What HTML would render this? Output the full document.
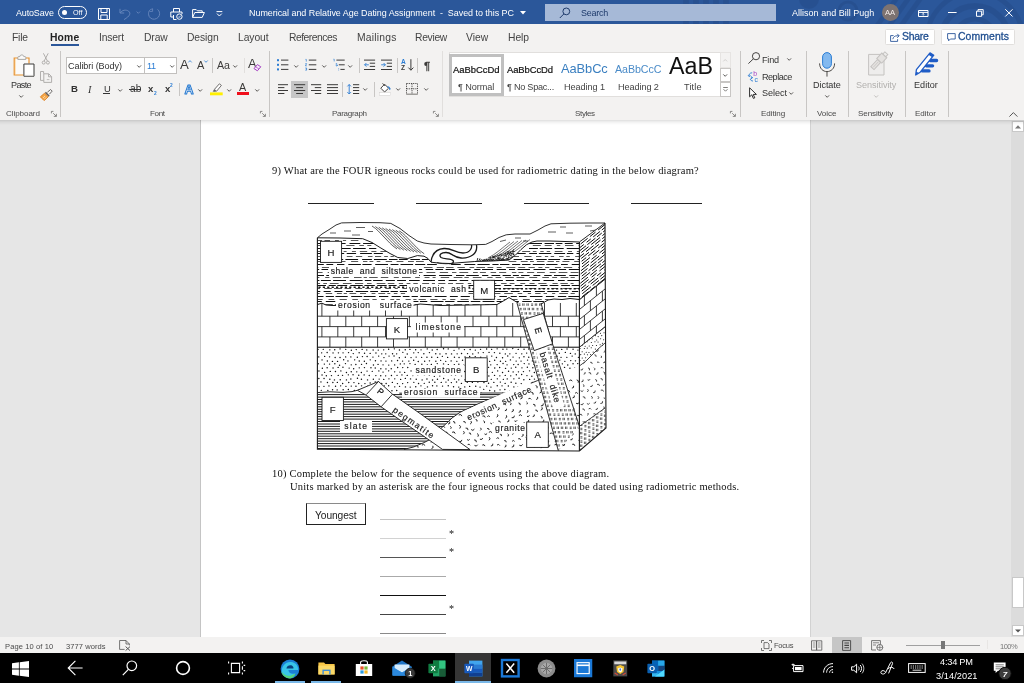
<!DOCTYPE html>
<html lang="en">
<head>
<meta charset="utf-8">
<title>Numerical and Relative Age Dating Assignment - Word</title>
<style>
*{box-sizing:border-box;margin:0;padding:0}
html,body{width:1024px;height:683px;overflow:hidden;background:#e6e6e6}
body{position:relative;font-family:"Liberation Sans",sans-serif;font-size:9.6px;color:#333;-webkit-font-smoothing:antialiased}
.abs,.t{position:absolute;white-space:nowrap}
.t{line-height:1;transform-origin:0 0;will-change:transform}
#titlebar{position:absolute;left:0;top:0;width:1024px;height:24px;background:#2b579a;overflow:hidden;color:#fff}
#tabs{position:absolute;left:0;top:24px;width:1024px;height:24px;background:#f3f2f1}
#ribbon{position:absolute;left:0;top:48px;width:1024px;height:71.7px;background:#f3f2f1;z-index:4}
#ribshadow{position:absolute;left:0;top:119.7px;width:1024px;height:5px;background:linear-gradient(rgba(0,0,0,.13),rgba(0,0,0,.05) 40%,rgba(0,0,0,0));z-index:5}
#docarea{position:absolute;left:0;top:119px;width:1024px;height:515px;background:#e6e6e6}
#page{position:absolute;left:200.2px;top:119px;width:611px;height:517.5px;background:#fff;border-left:1px solid #c4c4c4;border-right:1px solid #d2d2d2}
#statusbar{position:absolute;left:0;top:636.5px;width:1024px;height:17px;background:#f3f2f1;color:#555}
#taskbar{position:absolute;left:0;top:653px;width:1024px;height:30px;background:#000}
.serif{font-family:"Liberation Serif",serif;color:#111}
.tab{top:7px;font-size:10.2px;color:#444}
#sN1,#sS1{-webkit-text-stroke:.2px #111}
.sep{position:absolute;width:1px;background:#c8c6c4}
.grp{color:#555;font-size:8.4px}
svg{position:absolute;overflow:visible}
</style>
</head>
<body>

<!-- ================= TITLE BAR ================= -->
<div id="titlebar">
  <!-- decorative pattern -->
  <svg style="left:560px;top:0" width="464" height="24" viewBox="560 0 464 24">
    <g fill="none" stroke="#264d8b" stroke-width="5" opacity=".6">
      <path d="M686 -2V26M696 -2V26M706 -2V26M716 -2V26M726 -2V26" stroke-width="5.5"/>
      <circle cx="848" cy="11" r="9" stroke-width="3"/>
      <circle cx="848" cy="11" r="2.6" fill="#264d8b" stroke="none"/>
      <circle cx="809" cy="-1" r="10" fill="#264d8b" stroke="none"/>
      <path d="M874 30 L899 -5 M886 30 L911 -5 M898 30 L923 -5" stroke-width="5"/>
      <circle cx="975" cy="40" r="34" stroke-width="6"/>
      <circle cx="975" cy="40" r="48" stroke-width="5"/>
      <circle cx="975" cy="40" r="21" stroke-width="5"/>
    </g>
  </svg>
  <span class="t" id="tAuto" style="left:15.57px;top:9.00px;font-size:8.96px;letter-spacing:-0.137px">AutoSave</span>
  <div class="abs" style="left:58px;top:6px;width:28.5px;height:12.5px;border:1px solid #fff;border-radius:7px"></div>
  <div class="abs" style="left:62px;top:10px;width:5px;height:5px;border-radius:3px;background:#fff"></div>
  <span class="t" style="left:72.5px;top:9.2px;font-size:7.2px">Off</span>
  <!-- save -->
  <svg style="left:98px;top:8px" width="12" height="12" viewBox="0 0 12 12" fill="none" stroke="#fff" stroke-width="1">
    <path d="M.5 .5H11.5V11.5H.5Z"/><path d="M3 .5V4.5H9V.5"/><path d="M2.8 11.5V7H9.2V11.5"/>
  </svg>
  <!-- undo / redo dim -->
  <svg style="left:119px;top:8px" width="44" height="12" viewBox="0 0 44 12" fill="none" stroke="#6585bb" stroke-width="1">
    <path d="M1 .8V5H5.2"/><path d="M1.2 5C3 2 7 1.3 9.6 3.2C12 5.2 11.2 8 5 11.6"/>
    <path d="M17.6 3.6L19.3 5.3L21 3.6" stroke-width=".9"/>
    <path d="M33.5 1.2C30.5 .8 29.3 4 29.5 6.2C29.8 9.6 32.5 11.4 35.5 11.2C38.8 10.8 40.8 8 40.6 5.4C40.5 3.6 39.6 2.3 38.6 1.4"/><path d="M33.6 .4V3.4H30.6" stroke-width=".9"/>
  </svg>
  <!-- print preview -->
  <svg style="left:170px;top:8px" width="13" height="12" viewBox="0 0 13 12" fill="none" stroke="#fff" stroke-width="1">
    <path d="M3.5 4V.5H9.5V4"/><path d="M3.5 9H.8V4H12V6"/><path d="M3.5 7V11.5H6.5"/><circle cx="9.4" cy="8.6" r="2.7"/><path d="M8.2 8.6L9.1 9.5L10.7 7.7" stroke-width=".8"/>
  </svg>
  <!-- folder -->
  <svg style="left:191.5px;top:9px" width="13" height="9" viewBox="0 0 13 9" fill="none" stroke="#fff" stroke-width="1">
    <path d="M.6 8.4V.6H4.2L5.4 1.8H10.2V3.5"/><path d="M.6 8.4L2.8 3.5H12.4L10.2 8.4Z"/>
  </svg>
  <!-- customize -->
  <svg style="left:216px;top:10.5px" width="7" height="6" viewBox="0 0 7 6" fill="none" stroke="#fff" stroke-width="1">
    <path d="M.5 .6H6.3"/><path d="M1 2.6L3.4 5L5.8 2.6"/>
  </svg>
  <span class="t" id="tTitle" style="left:249.07px;top:9.00px;font-size:8.96px;letter-spacing:-0.035px">Numerical and Relative Age Dating Assignment&nbsp;&nbsp;-&nbsp;&nbsp;Saved to this PC</span>
  <svg style="left:519.5px;top:10.5px" width="6" height="4" viewBox="0 0 6 4"><path d="M0 0H6L3 3.4Z" fill="#fff"/></svg>
  <!-- search -->
  <div class="abs" style="left:545px;top:4px;width:230.5px;height:17px;background:#a6b9d7"></div>
  <svg style="left:559px;top:6.5px" width="12" height="12" viewBox="0 0 12 12" fill="none" stroke="#1e3a6b" stroke-width="1">
    <circle cx="7.3" cy="4.4" r="3.4"/><path d="M4.9 6.9L.8 11"/>
  </svg>
  <span class="t" id="tSearch" style="left:581.32px;top:9.00px;font-size:8.96px;color:#1e3a6b;letter-spacing:-0.25px">Search</span>
  <span class="t" id="tUser" style="left:792.25px;top:9.00px;font-size:8.96px;letter-spacing:0.036px">Allison and Bill Pugh</span>
  <div class="abs" style="left:881.5px;top:3.5px;width:17px;height:17px;border-radius:9px;background:#7d7371"></div>
  <span class="t" style="left:884.6px;top:9px;font-size:7.6px;color:#f3ecea">AA</span>
  <!-- ribbon display -->
  <svg style="left:917.5px;top:9.5px" width="11" height="7" viewBox="0 0 11 7" fill="none" stroke="#fff" stroke-width="1">
    <path d="M.5 .5H10V6.5H.5Z"/><path d="M.5 2.4H10"/><path d="M5.2 5.6V3.4M4.2 4.4L5.2 3.4L6.2 4.4" stroke-width=".8"/>
  </svg>
  <svg style="left:947.5px;top:12px" width="9" height="2" viewBox="0 0 9 2"><path d="M0 .5H8.6" stroke="#fff" stroke-width="1"/></svg>
  <svg style="left:976px;top:9px" width="8" height="8" viewBox="0 0 8 8" fill="none" stroke="#fff" stroke-width="1">
    <path d="M.5 2.2H5.6V7.3H.5Z"/><path d="M2 2.2V.6H7.2V5.8H5.6"/>
  </svg>
  <svg style="left:1005px;top:9px" width="8" height="8" viewBox="0 0 8 8" fill="none" stroke="#fff" stroke-width="1">
    <path d="M.3 .3L7.5 7.5M7.5 .3L.3 7.5"/>
  </svg>
</div>

<!-- ================= TABS ================= -->
<div id="tabs">
  <span class="t tab" id="tbFile" style="left:11.79px;top:9.00px;font-size:10.32px;letter-spacing:-0.203px">File</span>
  <span class="t tab" id="tbHome" style="left:50.10px;top:9.00px;font-size:10.32px;font-weight:bold;color:#222;letter-spacing:0.169px">Home</span>
  <div class="abs" style="left:50.5px;top:19.5px;width:28.4px;height:2.4px;background:#2b579a"></div>
  <span class="t tab" id="tbInsert" style="left:98.50px;top:9.00px;font-size:10.32px;letter-spacing:-0.155px">Insert</span>
  <span class="t tab" id="tbDraw" style="left:143.60px;top:9.00px;font-size:10.32px;letter-spacing:-0.117px">Draw</span>
  <span class="t tab" id="tbDesign" style="left:186.79px;top:9.00px;font-size:10.32px;letter-spacing:-0.078px">Design</span>
  <span class="t tab" id="tbLayout" style="left:237.90px;top:9.00px;font-size:10.32px;letter-spacing:-0.072px">Layout</span>
  <span class="t tab" id="tbRef" style="left:288.60px;top:9.00px;font-size:10.32px;letter-spacing:-0.493px">References</span>
  <span class="t tab" id="tbMail" style="left:357.00px;top:9.00px;font-size:10.32px;letter-spacing:0.211px">Mailings</span>
  <span class="t tab" id="tbReview" style="left:415.20px;top:9.00px;font-size:10.32px;letter-spacing:-0.302px">Review</span>
  <span class="t tab" id="tbView" style="left:466.40px;top:9.00px;font-size:10.32px;letter-spacing:0.046px">View</span>
  <span class="t tab" id="tbHelp" style="left:507.90px;top:9.00px;font-size:10.32px;letter-spacing:-0.067px">Help</span>
  <div class="abs" style="left:884.5px;top:5px;width:50px;height:16px;background:#fff;border:1px solid #e1dfdd;border-radius:1.5px"></div>
  <svg style="left:889.5px;top:8.5px" width="10" height="9" viewBox="0 0 10 9" fill="none" stroke="#2b579a" stroke-width=".9">
    <path d="M3.6 2.6H.6V8.4H7.6V6.2"/><path d="M2.8 6.2C3.2 4 4.8 2.8 7 2.8H9"/><path d="M7.2 .8L9.2 2.8L7.2 4.8"/>
  </svg>
  <span class="t" id="tbShare" style="left:901.73px;top:8.01px;font-size:10.43px;-webkit-text-stroke:.3px #1f4e8f;color:#1f4e8f;letter-spacing:-0.254px">Share</span>
  <div class="abs" style="left:941px;top:5px;width:73.5px;height:16px;background:#fff;border:1px solid #e1dfdd;border-radius:1.5px"></div>
  <svg style="left:946.5px;top:8.5px" width="9" height="9" viewBox="0 0 9 9" fill="none" stroke="#2b579a" stroke-width=".9">
    <path d="M.6 .6H8.2V6H3.4L1.6 7.8V6H.6Z"/>
  </svg>
  <span class="t" id="tbComm" style="left:957.99px;top:8.01px;font-size:10.43px;-webkit-text-stroke:.3px #1f4e8f;color:#1f4e8f;letter-spacing:0.098px">Comments</span>
</div>

<!-- ================= RIBBON ================= -->
<div id="ribbon">
<!--R1-->
<svg style="left:12.5px;top:5.5px" width="23" height="23" viewBox="0 0 23 23" fill="none">
 <path d="M1.2 4H16V21H1.2Z" fill="#fbfaf9"/>
 <path d="M2.3 4.8V20.2" stroke="#fde3bd" stroke-width="1.4"/>
 <path d="M5.2 4H1.2V21H10.6" stroke="#e8912d" stroke-width="1.15"/>
 <path d="M12.6 4H16V9.6" stroke="#e8912d" stroke-width="1.15"/>
 <path d="M4.8 5.4V3.4C4.8 2.8 5.2 2.6 5.8 2.6H6.8C6.8 .4 10.8 .4 10.8 2.6H11.8C12.4 2.6 12.8 2.8 12.8 3.4V5.4Z" fill="#fafafa" stroke="#979593" stroke-width=".8"/>
 <path d="M10.9 10H21V22.2H10.9Z" fill="#fff" stroke="#3b3a39" stroke-width="1"/>
 <path d="M11.6 21.4H20.4" stroke="#d8d6d4" stroke-width=".8"/>
</svg>
<span class="t" id="rPaste" style="left:11.15px;top:33.00px;font-size:9.09px;color:#333;letter-spacing:-0.645px">Paste</span>
<svg style="left:19px;top:47.1px" width="4.4" height="3" viewBox="0 0 4.4 3" fill="none" stroke="#484644" stroke-width=".9"><path d="M.3 .4L2.2 2.3L4.1 .4"/></svg>
<svg style="left:42px;top:5.3px" width="8" height="12" viewBox="0 0 8 12" fill="none" stroke="#a9a7a5" stroke-width=".9">
 <path d="M1.4 .3L5.4 8M6.2 .3L2.2 8"/><circle cx="1.7" cy="9.6" r="1.5"/><circle cx="5.9" cy="9.6" r="1.5"/></svg>
<svg style="left:40px;top:23px" width="13" height="12" viewBox="0 0 13 12" fill="none" stroke="#a9a7a5" stroke-width=".9">
 <path d="M3.6 2.6V.5H.5V9.4H3.6"/><path d="M3.8 2.8H8.8L11.6 5.6V11.4H3.8Z"/><path d="M8.6 3V5.8H11.4"/><path d="M6.8 8.6H9.4" stroke-width=".7"/></svg>
<svg style="left:40px;top:40.6px" width="13" height="12" viewBox="0 0 13 12" fill="none">
 <path d="M7.4 3.2L10.6 .5L12.2 2.1L9.4 5.2" stroke="#605e5c" stroke-width=".9"/>
 <path d="M5.4 3.4L9.2 7.2" stroke="#605e5c" stroke-width="1.5"/>
 <path d="M4.6 4.2L8.2 7.8L4.4 11.4C3.2 10.8 1.4 9.2.4 7.8Z" fill="#f4a84a" stroke="#de7c1a" stroke-width=".9"/>
 <path d="M3 9L5 7M4.4 10.2L6.4 8.2" stroke="#fff" stroke-width=".5"/></svg>
<span class="t" id="gClip" style="left:6.45px;top:62.01px;font-size:8.05px;color:#4a4a4a;letter-spacing:-0.061px">Clipboard</span>
<svg style="left:51px;top:63.3px" width="6" height="6" viewBox="0 0 6 6" fill="none" stroke="#605e5c" stroke-width=".7"><path d="M.4 2.4V.4H2.4"/><path d="M2.2 2.2L5.2 5.2M5.4 2.8V5.4H2.8"/></svg>
<div class="sep" style="left:59.5px;top:3.200000000000003px;height:65.39999999999999px"></div>
<div class="abs" style="left:66px;top:9px;width:79px;height:16.6px;background:#fff;border:1px solid #c2c0be"></div>
<div class="abs" style="left:144.2px;top:9px;width:33.2px;height:16.6px;background:#fff;border:1px solid #c2c0be"></div>
<span class="t" id="rFont" style="left:67.56px;top:14.01px;font-size:9.09px;color:#333;letter-spacing:-0.077px">Calibri (Body)</span>
<svg style="left:137.3px;top:17.0px" width="4.4" height="3" viewBox="0 0 4.4 3" fill="none" stroke="#484644" stroke-width=".9"><path d="M.3 .4L2.2 2.3L4.1 .4"/></svg>
<span class="t" id="rSize" style="left:146.56px;top:14.01px;font-size:9.09px;color:#2b7cd3;letter-spacing:-0.307px">11</span>
<svg style="left:170.2px;top:17.0px" width="4.4" height="3" viewBox="0 0 4.4 3" fill="none" stroke="#484644" stroke-width=".9"><path d="M.3 .4L2.2 2.3L4.1 .4"/></svg>
<span class="t" id="rGrowA" style="left:179.54px;top:10.01px;font-size:13.2px;color:#3b3a39">A</span>
<svg style="left:188.4px;top:12px" width="4" height="3" viewBox="0 0 4 3" fill="none" stroke="#2b7cd3" stroke-width=".8"><path d="M.3 2.4L2 .6L3.7 2.4"/></svg>
<span class="t" id="rShrA" style="left:197.45px;top:12.01px;font-size:11px;color:#3b3a39">A</span>
<svg style="left:204.4px;top:11.600000000000001px" width="4" height="3" viewBox="0 0 4 3" fill="none" stroke="#2b7cd3" stroke-width=".8"><path d="M.3 .5L2 2.3L3.7 .5"/></svg>
<div class="sep" style="left:212.4px;top:10.299999999999997px;height:14.299999999999997px"></div>
<span class="t" id="rAa" style="left:216.97px;top:12.01px;font-size:10.66px;color:#3b3a39;letter-spacing:-0.076px">Aa</span>
<svg style="left:232.8px;top:16.8px" width="4.4" height="3" viewBox="0 0 4.4 3" fill="none" stroke="#484644" stroke-width=".9"><path d="M.3 .4L2.2 2.3L4.1 .4"/></svg>
<div class="sep" style="left:244.3px;top:10.299999999999997px;height:14.3px;background:#e1dfdd"></div>
<span class="t" id="rClrA" style="left:248.16px;top:10.01px;font-size:12.8px;color:#3b3a39">A</span>
<svg style="left:253px;top:16px" width="8.4" height="7.4" viewBox="0 0 8.4 7.4" fill="none"><path d="M4.4 .6L7.8 2.8L4.4 6.8L1 4.6Z" fill="#f8eafb" stroke="#a33fc0" stroke-width="1"/><path d="M2.6 2.8L6 5" stroke="#a33fc0" stroke-width=".7"/></svg>
<span class="t" id="rB" style="left:71.02px;top:36.01px;font-size:9.6px;font-weight:bold;color:#333">B</span>
<span class="t" id="rI" style="left:87.99px;top:37.00px;font-size:10.2px;font-style:italic;font-family:'Liberation Serif',serif;color:#333">I</span>
<span class="t" id="rU" style="left:103.53px;top:36.00px;font-size:9.4px;color:#333">U</span>
<div class="abs" style="left:103.1px;top:45.099999999999994px;width:7.3px;height:.9px;background:#333"></div>
<svg style="left:118.4px;top:40.6px" width="4.4" height="3" viewBox="0 0 4.4 3" fill="none" stroke="#484644" stroke-width=".9"><path d="M.3 .4L2.2 2.3L4.1 .4"/></svg>
<span class="t" id="rAb" style="left:129.50px;top:36.01px;font-size:10.19px;color:#333;letter-spacing:0.004px">ab</span>
<div class="abs" style="left:128.9px;top:41.400000000000006px;width:12.2px;height:.9px;background:#333"></div>
<span class="t" id="rX2" style="left:148.22px;top:36.01px;font-size:9.6px;font-weight:bold;color:#333">x</span>
<span class="t" id="rX2s" style="left:153.86px;top:44.00px;font-size:4.8px;color:#2b7cd3;font-weight:bold">2</span>
<span class="t" id="rX3" style="left:164.62px;top:36.01px;font-size:9.6px;font-weight:bold;color:#333">x</span>
<span class="t" id="rX3s" style="left:170.46px;top:36.01px;font-size:4.8px;color:#2b7cd3;font-weight:bold">2</span>
<div class="sep" style="left:178.6px;top:34.599999999999994px;height:13.800000000000011px"></div>
<svg style="left:182.6px;top:34.599999999999994px" width="12" height="12" viewBox="0 0 12 12"><text x="6" y="10.7" font-family="Liberation Sans, sans-serif" font-size="12.6" font-weight="bold" text-anchor="middle" fill="#fff" stroke="#2478d0" stroke-width=".95" stroke-linejoin="round">A</text></svg>
<svg style="left:198.2px;top:40.6px" width="4.4" height="3" viewBox="0 0 4.4 3" fill="none" stroke="#484644" stroke-width=".9"><path d="M.3 .4L2.2 2.3L4.1 .4"/></svg>
<svg style="left:209.5px;top:34.599999999999994px" width="13" height="13" viewBox="0 0 13 13" fill="none">
 <path d="M4.4 6.4L9.4 .8L11.4 2.4L6.6 8.2Z" stroke="#605e5c" stroke-width=".9" fill="#fff"/>
 <path d="M4.2 6.6L6.4 8.4L4.6 8.8L2.6 8.4Z" fill="#605e5c"/>
 <rect x="0" y="9.4" width="12.7" height="2.9" fill="#ffef00"/></svg>
<svg style="left:226.8px;top:40.6px" width="4.4" height="3" viewBox="0 0 4.4 3" fill="none" stroke="#484644" stroke-width=".9"><path d="M.3 .4L2.2 2.3L4.1 .4"/></svg>
<span class="t" id="rFcA" style="left:239.16px;top:34.01px;font-size:10.8px;color:#3b3a39">A</span>
<div class="abs" style="left:237px;top:44px;width:12px;height:2.9px;background:#f00f1c"></div>
<svg style="left:254.8px;top:40.6px" width="4.4" height="3" viewBox="0 0 4.4 3" fill="none" stroke="#484644" stroke-width=".9"><path d="M.3 .4L2.2 2.3L4.1 .4"/></svg>
<span class="t" id="gFont" style="left:150.40px;top:62.01px;font-size:8.05px;color:#4a4a4a;letter-spacing:-0.335px">Font</span>
<svg style="left:260.3px;top:63.3px" width="6" height="6" viewBox="0 0 6 6" fill="none" stroke="#605e5c" stroke-width=".7"><path d="M.4 2.4V.4H2.4"/><path d="M2.2 2.2L5.2 5.2M5.4 2.8V5.4H2.8"/></svg>
<div class="sep" style="left:268.7px;top:3.200000000000003px;height:65.39999999999999px"></div>
<!--/R1-->
<!--R2-->
<svg style="left:276.8px;top:11px" width="12" height="12" viewBox="0 0 12 12" fill="none">
 <rect x="0" y=".2" width="2" height="2" fill="#2b7cd3"/><rect x="0" y="4.8" width="2" height="2" fill="#2b7cd3"/><rect x="0" y="9.4" width="2" height="2" fill="#2b7cd3"/>
 <path d="M4 1.1H11.4M4 5.8H11.4M4 10.4H11.4" stroke="#3b3a39" stroke-width="1"/></svg>
<svg style="left:294.2px;top:16.8px" width="4.4" height="3" viewBox="0 0 4.4 3" fill="none" stroke="#484644" stroke-width=".9"><path d="M.3 .4L2.2 2.3L4.1 .4"/></svg>
<svg style="left:304.7px;top:11px" width="12" height="12" viewBox="0 0 12 12" fill="none">
 <path d="M.5 .4H1.3V2.6M.3 4.6H1.6L.4 6.8H1.8M.3 9H1.6V10H.8M1.6 10V11.2H.3" stroke="#2b7cd3" stroke-width=".7"/>
 <path d="M3.8 1.1H11.3M3.8 5.8H11.3M3.8 10.4H11.3" stroke="#3b3a39" stroke-width="1"/></svg>
<svg style="left:322px;top:16.8px" width="4.4" height="3" viewBox="0 0 4.4 3" fill="none" stroke="#484644" stroke-width=".9"><path d="M.3 .4L2.2 2.3L4.1 .4"/></svg>
<svg style="left:332.5px;top:11px" width="12" height="12" viewBox="0 0 12 12" fill="none">
 <path d="M.5 .2H1.2V2.4" stroke="#2b7cd3" stroke-width=".7"/><path d="M2.8 4.6H3.8V6.8M2.6 6.2L3.8 7L5 6.2" stroke="#2b7cd3" stroke-width=".7"/><path d="M5.6 9.4V11.4" stroke="#2b7cd3" stroke-width=".7" stroke-dasharray=".8 .6"/>
 <path d="M3.4 1.1H11.7M5.8 5.8H11.7M7.4 10.4H11.7" stroke="#3b3a39" stroke-width="1"/></svg>
<svg style="left:347.9px;top:16.8px" width="4.4" height="3" viewBox="0 0 4.4 3" fill="none" stroke="#484644" stroke-width=".9"><path d="M.3 .4L2.2 2.3L4.1 .4"/></svg>
<div class="sep" style="left:359.4px;top:10.299999999999997px;height:14.299999999999997px"></div>
<svg style="left:364.1px;top:11px" width="12" height="12" viewBox="0 0 12 12" fill="none">
 <path d="M0 1.1H11.1M5.8 4.2H11.1M5.8 7.4H11.1M0 10.5H11.1" stroke="#3b3a39" stroke-width="1"/>
 <path d="M4.8 5.8H.6M2.4 4L.6 5.8L2.4 7.6" stroke="#2b7cd3" stroke-width=".9"/></svg>
<svg style="left:380.9px;top:11px" width="12" height="12" viewBox="0 0 12 12" fill="none">
 <path d="M0 1.1H11M5.8 4.2H11M5.8 7.4H11M0 10.5H11" stroke="#3b3a39" stroke-width="1"/>
 <path d="M.2 5.8H4.4M2.6 4L4.4 5.8L2.6 7.6" stroke="#2b7cd3" stroke-width=".9"/></svg>
<div class="sep" style="left:396.6px;top:10.299999999999997px;height:14.299999999999997px"></div>
<span class="t" id="rSortA" style="left:401.07px;top:11.00px;font-size:6.6px;color:#2b7cd3;font-weight:bold">A</span>
<span class="t" id="rSortZ" style="left:401.27px;top:17.01px;font-size:6.6px;color:#3b3a39;font-weight:bold">Z</span>
<svg style="left:407.8px;top:11px" width="6" height="12" viewBox="0 0 6 12" fill="none" stroke="#3b3a39" stroke-width="1"><path d="M2.9 .2V11.2M.4 8.6L2.9 11.2L5.4 8.6"/></svg>
<div class="sep" style="left:417.4px;top:10.299999999999997px;height:14.299999999999997px"></div>
<span class="t" id="rPil" style="left:423.62px;top:12.00px;font-size:11.6px;color:#3b3a39;-webkit-text-stroke:.3px #3b3a39">¶</span>
<div class="abs" style="left:291.1px;top:33.2px;width:16.7px;height:16.6px;background:#c6c6c6"></div>
<svg style="left:278px;top:36px" width="11" height="11" viewBox="0 0 11 11" fill="none"><path d="M0 0.7H10M0 3.6H6.4M0 6.5H10M0 9.5H6.4" stroke="#3b3a39" stroke-width="1"/></svg>
<svg style="left:294px;top:36px" width="11" height="11" viewBox="0 0 11 11" fill="none"><path d="M0 0.7H11.2M2.2 3.6H9M0 6.5H11.2M2.2 9.5H9" stroke="#3b3a39" stroke-width="1"/></svg>
<svg style="left:310.8px;top:36px" width="11" height="11" viewBox="0 0 11 11" fill="none"><path d="M0 0.7H10.2M3.8 3.6H10.2M0 6.5H10.2M3.8 9.5H10.2" stroke="#3b3a39" stroke-width="1"/></svg>
<svg style="left:327px;top:36px" width="11" height="11" viewBox="0 0 11 11" fill="none"><path d="M0 0.7H11M0 3.6H11M0 6.5H11M0 9.5H11" stroke="#3b3a39" stroke-width="1"/></svg>
<div class="sep" style="left:342.4px;top:34px;height:14.599999999999994px"></div>
<svg style="left:347px;top:36px" width="12.5" height="11" viewBox="0 0 12.5 11" fill="none">
 <path d="M6 0.7H12.2M6 3.6H12.2M6 6.5H12.2M6 9.5H12.2" stroke="#3b3a39" stroke-width="1"/>
 <path d="M2.2 .5V10M.4 2.4L2.2 .5L4 2.4M.4 8.1L2.2 10L4 8.1" stroke="#2b7cd3" stroke-width=".9"/></svg>
<svg style="left:362.8px;top:40.4px" width="4.4" height="3" viewBox="0 0 4.4 3" fill="none" stroke="#484644" stroke-width=".9"><path d="M.3 .4L2.2 2.3L4.1 .4"/></svg>
<div class="sep" style="left:374.4px;top:34px;height:14.599999999999994px"></div>
<svg style="left:379px;top:34.599999999999994px" width="12.4" height="13" viewBox="0 0 12.4 13" fill="none">
 <path d="M5.6 1.2L9.6 5.2L5.6 9L1.8 5.2Z" stroke="#3b3a39" stroke-width=".95" fill="#fff"/><path d="M3.6 .4L6.2 3" stroke="#3b3a39" stroke-width=".95"/>
 <path d="M8.4 3.8C9.8 3.6 10.8 4.6 10.8 6.4" stroke="#2b7cd3" stroke-width="1.1"/><path d="M9.8 5.6L10.8 7L11.8 5.6Z" fill="#2b7cd3"/>
 <rect x=".2" y="9.8" width="11.6" height="2.4" fill="#fff" stroke="#c8c6c4" stroke-width=".4"/></svg>
<svg style="left:396px;top:40.4px" width="4.4" height="3" viewBox="0 0 4.4 3" fill="none" stroke="#484644" stroke-width=".9"><path d="M.3 .4L2.2 2.3L4.1 .4"/></svg>
<svg style="left:406.2px;top:34.8px" width="12" height="12" viewBox="0 0 12 12" fill="none" stroke="#3b3a39" stroke-width=".9">
 <path d="M.5 .5H11.5M.5 .5V11M11.5 .5V11M6 .5V11M.5 5.8H11.5" stroke-dasharray="1.2 1"/><path d="M.2 11.2H11.8" stroke="#8a8886" stroke-width="1.2"/></svg>
<svg style="left:423.9px;top:40.4px" width="4.4" height="3" viewBox="0 0 4.4 3" fill="none" stroke="#484644" stroke-width=".9"><path d="M.3 .4L2.2 2.3L4.1 .4"/></svg>
<span class="t" id="gPara" style="left:331.51px;top:62.01px;font-size:8.05px;color:#4a4a4a;letter-spacing:-0.311px">Paragraph</span>
<svg style="left:433.2px;top:63.3px" width="6" height="6" viewBox="0 0 6 6" fill="none" stroke="#605e5c" stroke-width=".7"><path d="M.4 2.4V.4H2.4"/><path d="M2.2 2.2L5.2 5.2M5.4 2.8V5.4H2.8"/></svg>
<div class="sep" style="left:442.4px;top:3.200000000000003px;height:65.4px;background:#e1dfdd"></div>
<div class="abs" style="left:449.2px;top:4.399999999999999px;width:281.4px;height:44.2px;background:#fff;border:.6px solid #e1dfdd"></div>
<div class="abs" style="left:449.2px;top:6.200000000000003px;width:54.6px;height:41.6px;border:3px solid #c0c0c0"></div>
<span class="t" id="sN1" style="left:453.23px;top:17.00px;font-size:9.46px;color:#111;letter-spacing:-0.049px">AaBbCcDd</span>
<span class="t" id="sN2" style="left:458.35px;top:35.01px;font-size:9.15px;color:#444;letter-spacing:-0.076px">¶ Normal</span>
<span class="t" id="sS1" style="left:507.29px;top:17.00px;font-size:9.46px;color:#111;letter-spacing:-0.099px">AaBbCcDd</span>
<span class="t" id="sS2" style="left:506.55px;top:35.01px;font-size:9.15px;color:#444;letter-spacing:-0.261px">¶ No Spac...</span>
<span class="t" id="sH1" style="left:561.36px;top:15.00px;font-size:12.86px;color:#3a7fc0;letter-spacing:-0.081px">AaBbCc</span>
<span class="t" id="sH1b" style="left:563.85px;top:35.01px;font-size:9.15px;color:#444;letter-spacing:-0.052px">Heading 1</span>
<span class="t" id="sH2" style="left:615.27px;top:16.01px;font-size:10.68px;color:#4a8bc8;letter-spacing:-0.087px">AaBbCcC</span>
<span class="t" id="sH2b" style="left:618.15px;top:35.01px;font-size:9.15px;color:#444;letter-spacing:-0.083px">Heading 2</span>
<span class="t" id="sT1" style="left:669.05px;top:7.01px;font-size:23.28px;color:#111;letter-spacing:0.011px">AaB</span>
<span class="t" id="sT2" style="left:683.74px;top:35.01px;font-size:9.15px;color:#444;letter-spacing:0.166px">Title</span>
<div class="abs" style="left:720.2px;top:4.399999999999999px;width:10.4px;height:15.6px;background:#f3f2f1;border:1px solid #e6e4e2"></div>
<div class="abs" style="left:720.2px;top:20px;width:10.4px;height:14.2px;background:#fff;border:1px solid #c8c6c4"></div>
<div class="abs" style="left:720.2px;top:34px;width:10.4px;height:14.6px;background:#fff;border:1px solid #c8c6c4"></div>
<svg style="left:723.2px;top:11px" width="4.4" height="3" viewBox="0 0 4.4 3" fill="none" stroke="#c8c6c4" stroke-width=".8"><path d="M.3 2.4L2.2 .5L4.1 2.4"/></svg>
<svg style="left:723.2px;top:26.2px" width="4.4" height="3" viewBox="0 0 4.4 3" fill="none" stroke="#484644" stroke-width=".9"><path d="M.3 .4L2.2 2.3L4.1 .4"/></svg>
<svg style="left:723px;top:38.599999999999994px" width="5" height="5" viewBox="0 0 5 5" fill="none" stroke="#605e5c" stroke-width=".8"><path d="M.2 .5H4.8M.5 2.2L2.5 4.2L4.5 2.2"/></svg>
<span class="t" id="gStyles" style="left:574.60px;top:62.01px;font-size:8.05px;color:#4a4a4a;letter-spacing:-0.362px">Styles</span>
<svg style="left:730.4px;top:63.3px" width="6" height="6" viewBox="0 0 6 6" fill="none" stroke="#605e5c" stroke-width=".7"><path d="M.4 2.4V.4H2.4"/><path d="M2.2 2.2L5.2 5.2M5.4 2.8V5.4H2.8"/></svg>
<div class="sep" style="left:740px;top:3.200000000000003px;height:65.39999999999999px"></div>
<svg style="left:747.8px;top:4px" width="12.4" height="12" viewBox="0 0 12.4 12" fill="none" stroke="#3b3a39" stroke-width=".95"><circle cx="8" cy="4.2" r="3.6"/><path d="M5.4 6.8L.4 11.6"/></svg>
<span class="t" id="eFind" style="left:762.46px;top:8.01px;font-size:9.09px;color:#333;letter-spacing:-0.208px">Find</span>
<svg style="left:787px;top:10.1px" width="4.4" height="3" viewBox="0 0 4.4 3" fill="none" stroke="#484644" stroke-width=".9"><path d="M.3 .4L2.2 2.3L4.1 .4"/></svg>
<svg style="left:747.6px;top:22px" width="12" height="12.4" viewBox="0 0 12 12.4" fill="none">
 <text x="5.2" y="5.6" font-family="Liberation Sans, sans-serif" font-size="6.8" fill="#a33fc0">b</text>
 <text x="6.6" y="12" font-family="Liberation Sans, sans-serif" font-size="6.8" fill="#2b7cd3">c</text>
 <path d="M4.2 2.8C1.8 2.8 .8 4.4 1 6.2M.1 5.2L1.1 6.6L2.5 5.6" stroke="#2b7cd3" stroke-width=".9"/>
 <path d="M2.8 6.4L4.6 7.6L3 9M4.4 7.6C3.6 7.6 3 7.8 2.6 8.2" stroke="#2b7cd3" stroke-width=".9"/>
 <path d="M2.2 9C2.6 10.4 3.6 11 5 11" stroke="#2b7cd3" stroke-width=".9"/></svg>
<span class="t" id="eRepl" style="left:762.46px;top:25.01px;font-size:9.09px;color:#333;letter-spacing:-0.508px">Replace</span>
<svg style="left:748.8px;top:39px" width="9" height="12" viewBox="0 0 9 12" fill="#fff" stroke="#222" stroke-width=".95"><path d="M.6 .8V9.8L2.8 7.8L4.4 11.4L5.8 10.8L4.2 7.4H7.4Z"/></svg>
<span class="t" id="eSel" style="left:761.55px;top:41.01px;font-size:9.09px;color:#333;letter-spacing:-0.058px">Select</span>
<svg style="left:789.2px;top:44.1px" width="4.4" height="3" viewBox="0 0 4.4 3" fill="none" stroke="#484644" stroke-width=".9"><path d="M.3 .4L2.2 2.3L4.1 .4"/></svg>
<span class="t" id="gEdit" style="left:760.51px;top:62.01px;font-size:8.05px;color:#4a4a4a;letter-spacing:-0.067px">Editing</span>
<div class="sep" style="left:805.5px;top:3.200000000000003px;height:65.39999999999999px"></div>
<svg style="left:819.2px;top:3.6000000000000014px" width="16.4" height="25" viewBox="0 0 16.4 25" fill="none">
 <rect x="3.6" y=".6" width="8.8" height="15.6" rx="4.4" fill="#83b9ef" stroke="#2b7cd3" stroke-width="1"/>
 <path d="M.6 11.4C.6 16.6 4 19.6 8 19.6C12 19.6 15.6 16.6 15.6 11.4" stroke="#4a4846" stroke-width="1"/><path d="M8 19.6V24.6" stroke="#4a4846" stroke-width="1"/></svg>
<span class="t" id="vDict" style="left:813.15px;top:33.00px;font-size:9.09px;color:#333;letter-spacing:-0.068px">Dictate</span>
<svg style="left:824.6px;top:46.8px" width="4.4" height="3" viewBox="0 0 4.4 3" fill="none" stroke="#484644" stroke-width=".9"><path d="M.3 .4L2.2 2.3L4.1 .4"/></svg>
<span class="t" id="gVoice" style="left:817.20px;top:62.01px;font-size:8.05px;color:#4a4a4a;letter-spacing:-0.071px">Voice</span>
<div class="sep" style="left:848.3px;top:3.200000000000003px;height:65.39999999999999px"></div>
<svg style="left:867.6px;top:3.6000000000000014px" width="22" height="24" viewBox="0 0 22 24" fill="none" stroke="#c4c2c0" stroke-width="1">
 <path d="M.6 2.4H16V23H.6Z" fill="#eeedec"/>
 <g transform="translate(9.2,11) rotate(-47)"><rect x="-7" y="-2.2" width="9.6" height="4.4" fill="#e4e2e0"/><path d="M-5.8 0H1.4" stroke-width=".7"/><rect x="3" y="-3.4" width="7.4" height="6.8" fill="#e4e2e0"/><rect x="10.4" y="-2" width="3" height="4" fill="#eeedec"/></g></svg>
<span class="t" id="sSens" style="left:856.25px;top:33.00px;font-size:9.09px;color:#b3b1af;letter-spacing:-0.05px">Sensitivity</span>
<svg style="left:873.8px;top:46.8px" width="4.4" height="3" viewBox="0 0 4.4 3" fill="none" stroke="#bdbbb9" stroke-width=".9"><path d="M.3 .4L2.2 2.3L4.1 .4"/></svg>
<span class="t" id="gSens" style="left:858.20px;top:62.01px;font-size:8.05px;color:#4a4a4a;letter-spacing:-0.083px">Sensitivity</span>
<div class="sep" style="left:904.6px;top:3.200000000000003px;height:65.39999999999999px"></div>
<svg style="left:914.6px;top:4.399999999999999px" width="24" height="24" viewBox="0 0 24 24" fill="none">
 <path d="M15.4 8.5H21.6M11.4 13.8H17.6M7.4 18.9H14" stroke="#1f5cc6" stroke-width="3.3" stroke-linecap="round"/>
 <path d="M15 .9L18.8 3.2L5.2 20.2L.7 23L1.4 17.6Z" fill="#fff" stroke="#1f5cc6" stroke-width="1.3" stroke-linejoin="round"/>
 <path d="M13.4 2.8L17.2 5.2L18.8 3.2L15 .9Z" fill="#1f5cc6"/><path d="M.7 23L1.2 19.4L3.8 21Z" fill="#1f5cc6"/></svg>
<span class="t" id="eEd" style="left:914.46px;top:33.00px;font-size:9.09px;color:#333;letter-spacing:0.015px">Editor</span>
<span class="t" id="gEd" style="left:915.40px;top:62.01px;font-size:8.05px;color:#4a4a4a;letter-spacing:-0.005px">Editor</span>
<div class="sep" style="left:947.5px;top:3.200000000000003px;height:65.39999999999999px"></div>
<svg style="left:1008.5px;top:64.2px" width="9" height="5" viewBox="0 0 9 5" fill="none" stroke="#444" stroke-width=".9"><path d="M.4 4.6L4.4 .6L8.4 4.6"/></svg>
<!--/R2-->
</div>
<div id="ribshadow"></div>

<!-- ================= DOCUMENT ================= -->
<div id="page">
</div>
<div id="doc">
  <span class="t serif" id="dQ9" style="left:272.18px;top:166.00px;font-size:10.5px;letter-spacing:0.209px">9) What are the FOUR igneous rocks could be used for radiometric dating in the below diagram?</span>
  <div class="abs" style="left:307.8px;top:202.6px;width:66.6px;height:1px;background:#222"></div>
  <div class="abs" style="left:416.2px;top:202.6px;width:66px;height:1px;background:#222"></div>
  <div class="abs" style="left:523.9px;top:202.6px;width:65.4px;height:1px;background:#222"></div>
  <div class="abs" style="left:631.1px;top:202.6px;width:71.4px;height:1px;background:#222"></div>
<!--DIAG-->
<svg id="diagram" style="left:0;top:0" width="1024" height="683" viewBox="0 0 1024 683" fill="none" stroke-linecap="butt" font-family="'Liberation Sans',sans-serif">
<defs>
<clipPath id="cShale"><path d="M317.4 237.8L340 238L362.7 238.7L372 242.5L380 247.5L390 253.5L397.8 257.5L407.8 258.5L417.3 255.6L424 256.2L428 258.5L431 262.2L440 263.2L450 263.5L462 262.5L474.8 261.5L492 261L509 260L515 255.5L521 249.5L526.7 244.6L532 242L537 241L550 241L565 241.5L579.4 242L579.4 299.5L579.4 299.5L570 298.5L562 299.5L554 299L548 300L543 303L537 305.8L531 304.5L524 305.5L519 303.5L514 300.5L509 297.5L505 300L497 304.5L470 305L440 305.5L420 304L412 305.5L332 305.5L326 305L322 303.2L317.4 304.5Z"/></clipPath>
<clipPath id="cLime"><path d="M317.4 304.5L322 303.2L326 305L332 305.5L412 305.5L420 304L440 305.5L470 305L497 304.5L505 300L509 297.5L514 300.5L519 303.5L524 305.5L531 304.5L537 305.8L543 303L548 300L554 299L562 299.5L570 298.5L579.4 299.5L579.4 347.3L317.4 347.3Z"/></clipPath>
<clipPath id="cSand"><path d="M317.4 347.3L579.4 347.3L579.4 366L546 377L537.3 380.7L520 387.5L500 395L507 392.8L399.6 393.2L392.5 394.2L378.5 381.5L357.4 390.3L352 391.6L343 392.4L330 391.8L317.4 392.6Z"/></clipPath>
<clipPath id="cSlate"><path d="M317.4 392.6L330 391.8L343 392.4L352 391.6L357.4 390.3L357.4 390.3L378.5 381.5L392.5 394.2L399.6 393.2L507 392.8L500 395L480 403L460 412.3L452 418L445.2 424.6L439 430L433 438L424 442.6L413.6 447L404 449.3L317.4 449.2Z"/></clipPath>
<clipPath id="cGran"><path d="M404 449.3L413.6 447L424 442.6L433 438L439 430L445.2 424.6L452 418L460 412.3L480 403L500 395L520 387.5L537.3 380.7L546 377L579.4 366L579.4 451L404 449.3Z"/></clipPath>
<clipPath id="cFront"><path d="M317.4 237.8L340 238L362.7 238.7L372 242.5L380 247.5L390 253.5L397.8 257.5L407.8 258.5L417.3 255.6L424 256.2L428 258.5L431 262.2L440 263.2L450 263.5L462 262.5L474.8 261.5L492 261L509 260L515 255.5L521 249.5L526.7 244.6L532 242L537 241L550 241L565 241.5L579.4 242L579.4 451L317.4 449.2Z"/></clipPath>
<clipPath id="cSide"><path d="M579.4 242L605 223L606 428L579.4 451Z"/></clipPath>
</defs>
<g clip-path="url(#cShale)"><path d="M314.9 243.5h7.8M324.3 243.5h8.9M335.6 243.5h10M349.5 243.5h10.8M363.1 243.5h10.3M529 243.5h13M544.6 243.5h9.4M555.7 243.5h6.7M564.8 243.5h7.9M576.2 243.5h7.1M312.5 248.5h11.5M326.3 248.5h11.6M341.9 248.5h8.8M353.1 248.5h12.6M369.1 248.5h7.2M529 248.5h8.9M539.7 248.5h12.4M554.5 248.5h9.2M566.7 248.5h12.3M316.7 253.5h12.8M331.5 253.5h12.7M346.7 253.5h9.4M360.1 253.5h11.8M373.8 253.5h9M513.3 253.5h12.4M529.2 253.5h7.8M538.9 253.5h12.4M554.2 253.5h10.9M566.9 253.5h6.4M576.5 253.5h9M313.1 259.5h7.7M323 259.5h9.2M334.1 259.5h9.1M345.4 259.5h12.7M362.1 259.5h9.8M374 259.5h12.8M389 259.5h8.5M399 259.5h8.7M410.4 259.5h9.5M421.9 259.5h9.5M513.6 259.5h8.3M525.8 259.5h7M536.2 259.5h10.5M548.3 259.5h11.8M563.8 259.5h10.4M577.6 259.5h11.7M314.5 264.5h9.3M326.4 264.5h6.8M337 264.5h7.4M348.3 264.5h12.6M362.4 264.5h9.2M375.2 264.5h12.8M390.6 264.5h7.9M400.5 264.5h12.6M415.1 264.5h10.1M427.1 264.5h9.7M451.1 264.5h9.6M464.4 264.5h10.9M477.4 264.5h12.3M492.4 264.5h6.2M500 264.5h9.4M512.1 264.5h8.1M522.1 264.5h8.4M532.8 264.5h11.9M546.2 264.5h11.3M561 264.5h6.8M571.7 264.5h11M312.6 269.5h6.6M321.5 269.5h6.6M330.3 269.5h7.8M341 269.5h12.2M356.6 269.5h8.9M368 269.5h9.7M380.1 269.5h8.4M390.2 269.5h7.9M402 269.5h6.9M411.7 269.5h10.4M425.7 269.5h7.5M435.4 269.5h7.7M445.6 269.5h9.1M458.7 269.5h11.9M474.3 269.5h6.2M482 269.5h11M496.7 269.5h9.3M509 269.5h6M517.5 269.5h12.5M533.5 269.5h12M549.4 269.5h7.7M559 269.5h7.1M568.8 269.5h10.8M312.7 275.5h11.3M326.3 275.5h12.7M341.7 275.5h7.3M351.1 275.5h8.9M363.1 275.5h12.6M377.7 275.5h8.8M388.4 275.5h12.8M403.1 275.5h6.4M411.1 275.5h8.8M423.6 275.5h12.2M439.1 275.5h13M456 275.5h8.3M466.2 275.5h12.6M482.1 275.5h6.2M491.5 275.5h8.7M502.6 275.5h8.3M512.9 275.5h6M521.1 275.5h8.5M533.4 275.5h6.9M544.2 275.5h7.5M554 275.5h11.8M569.3 275.5h9M312.9 280.5h6.5M320.9 280.5h9.9M333.1 280.5h12.9M349.7 280.5h12.9M364.8 280.5h6.6M373.1 280.5h9.5M385.8 280.5h9.1M397.1 280.5h8.9M409 280.5h10.7M423.1 280.5h11.9M438.2 280.5h6.8M448.7 280.5h8.1M459.6 280.5h8.6M471.6 280.5h7.4M481.1 280.5h7.7M490.7 280.5h12.2M505.8 280.5h8.3M516.6 280.5h12.9M532.3 280.5h7.6M543.5 280.5h10.6M558 280.5h6.7M567.4 280.5h11.7M313.8 285.5h12.2M328.7 285.5h7.1M337.3 285.5h9.9M350.3 285.5h12.4M364.4 285.5h10.4M377.2 285.5h9.5M388.6 285.5h8M399.4 285.5h12.5M413.6 285.5h9.4M426.6 285.5h12.8M441.3 285.5h6.9M452.1 285.5h12.8M467.6 285.5h6.4M477.8 285.5h8.7M490.3 285.5h10.3M504.2 285.5h7.1M514.8 285.5h7.6M524.8 285.5h11.9M540.3 285.5h7.3M549.6 285.5h8.8M561.2 285.5h8.7M571.7 285.5h7.7M311.8 291.5h8.5M323.6 291.5h7.1M334.5 291.5h7.9M346 291.5h7M355.7 291.5h12.4M370.2 291.5h7.8M380.8 291.5h8.2M390.6 291.5h7.3M399.8 291.5h12.6M415.5 291.5h12.3M429.7 291.5h11.5M443 291.5h9.7M455.8 291.5h8.5M468 291.5h9.9M480.9 291.5h12.2M494.8 291.5h13M510.8 291.5h8.8M523.1 291.5h7.9M534.9 291.5h10M547.3 291.5h11.4M561.3 291.5h7.2M571.9 291.5h6.3M316.3 296.5h7.2M325.8 296.5h8.1M335.5 296.5h12.2M351.2 296.5h11M363.7 296.5h11.9M379 296.5h9.3M391.6 296.5h9.2M402.8 296.5h6.7M411.6 296.5h6.3M420.3 296.5h11.2M434.7 296.5h11.9M449.9 296.5h7.9M460.7 296.5h9.1M473.2 296.5h9.7M485 296.5h10.5M499.4 296.5h7.5M510.7 296.5h6.1M518.9 296.5h7.7M529.9 296.5h12.6M545.9 296.5h8.3M557.9 296.5h8.3M568.3 296.5h12.4M313.6 301.5h8.2M325.8 301.5h9.5M338.9 301.5h10.3M350.8 301.5h8.9M362.3 301.5h11.4M376.1 301.5h10.9M389.9 301.5h7.5M401 301.5h6.6M411.2 301.5h7.2M419.9 301.5h7.4M430.7 301.5h12.8M445.1 301.5h9.4M457.3 301.5h11.6M470.8 301.5h9.5M482.6 301.5h11.8M496.6 301.5h12.6M511.4 301.5h7.5M522.2 301.5h9.5M533.4 301.5h10.5M545.6 301.5h11.5M560.3 301.5h11.5M574.9 301.5h8.5" stroke="#111" stroke-width="1.05"/><path d="M313.1 240.5h8.9M324.5 240.5h5.5M335 240.5h3.9M342.9 240.5h3.2M350.8 240.5h7.6M317.1 245.5h6.2M325.9 245.5h6.3M334.2 245.5h6.2M346.3 245.5h8.2M359.3 245.5h4.6M367.3 245.5h4M532.8 245.5h8M544.7 245.5h6.9M556.8 245.5h3.5M565 245.5h8.5M578.6 245.5h7.5M316.9 251.5h6M327 251.5h6.1M335.3 251.5h5.6M343.6 251.5h3M351.9 251.5h4M359.8 251.5h7.4M371.4 251.5h5M380.4 251.5h6.3M522.2 251.5h8M532.8 251.5h3.7M540.3 251.5h3.4M546.7 251.5h3.4M554.8 251.5h7.7M568.1 251.5h3.9M576.9 251.5h7M317 256.5h6.8M329 256.5h3.5M338 256.5h3.4M346.8 256.5h5.7M355.9 256.5h6.3M367.9 256.5h4.6M375 256.5h6.2M384.2 256.5h3.7M390.5 256.5h3.3M513.9 256.5h5.1M524.3 256.5h7.2M536 256.5h5.4M544.9 256.5h3.3M550.7 256.5h3.4M559.1 256.5h4.5M566.3 256.5h3.5M575.2 256.5h8.2M314.5 261.5h6M325.9 261.5h7.8M339 261.5h6.5M351.1 261.5h7.1M363 261.5h4.4M369.5 261.5h3.8M376.7 261.5h3.6M385.7 261.5h6.4M396.6 261.5h6.8M408 261.5h5.9M416 261.5h7.8M508.7 261.5h7.6M520.8 261.5h6.9M530 261.5h3.9M536.9 261.5h7.5M547.5 261.5h6.4M556 261.5h3.4M562.4 261.5h7M574.2 261.5h7.1M313.1 267.5h5.2M321.9 267.5h9M335.3 267.5h5.2M344.2 267.5h4.7M351 267.5h3.6M360 267.5h4.7M370.4 267.5h4.5M378 267.5h6.1M386.8 267.5h5.2M397.9 267.5h8.3M411.4 267.5h6.8M423.9 267.5h8.6M436.7 267.5h7.3M446.2 267.5h7.4M457.4 267.5h7.5M469.5 267.5h4.7M476.4 267.5h8.6M487.5 267.5h5.8M496.7 267.5h4.8M506.4 267.5h8.9M518.3 267.5h6.9M528.5 267.5h6.3M538.4 267.5h4M545.1 267.5h4.2M554.9 267.5h6M563.8 267.5h8.4M578.2 267.5h5.7M315.7 272.5h6.9M327.7 272.5h5.7M337.6 272.5h3.2M346 272.5h4.4M356.1 272.5h6.9M366.2 272.5h3.8M372.9 272.5h6.8M384.5 272.5h3.7M390.5 272.5h6.1M401 272.5h5.3M409.2 272.5h6.6M417.8 272.5h4.8M426.5 272.5h8.8M439.8 272.5h8.3M452 272.5h4.4M459.4 272.5h8.8M473 272.5h4.8M479.9 272.5h6M490.6 272.5h5.5M499.2 272.5h7M511.9 272.5h4.4M518.4 272.5h5M527.1 272.5h7.1M537 272.5h7.8M549.7 272.5h6M558.6 272.5h8.8M570.6 272.5h7.9M314.2 277.5h5.2M325.2 277.5h4.2M332.8 277.5h8.4M343.3 277.5h5.5M354 277.5h7.6M363.7 277.5h3.2M369.2 277.5h8.5M380.8 277.5h7.5M393.8 277.5h5M402 277.5h8.7M415.2 277.5h4.6M424.6 277.5h4.9M432.6 277.5h3M440.7 277.5h8.5M453.7 277.5h8.7M464.4 277.5h4.4M472.8 277.5h8.7M487.3 277.5h5.3M495.6 277.5h5.6M505.2 277.5h8.6M516.5 277.5h7.8M529.3 277.5h7.9M542.3 277.5h6.6M552.2 277.5h4.9M560.6 277.5h7.7M570.6 277.5h4.2M316.9 283.5h3.2M323.3 283.5h3.7M329.8 283.5h8.8M342.9 283.5h8.6M355 283.5h8.2M367 283.5h4.6M376.7 283.5h8.7M387.8 283.5h6.6M398.8 283.5h4.3M406.6 283.5h3.8M413.3 283.5h4.5M422.2 283.5h6.9M431.9 283.5h3.1M438.3 283.5h7.1M448.1 283.5h4.9M455.8 283.5h7.8M467.8 283.5h3.4M473.6 283.5h5.4M483.1 283.5h6.8M492.3 283.5h4M501.1 283.5h5.5M509.7 283.5h4.8M520.3 283.5h4.9M529.5 283.5h5.1M538.3 283.5h8.2M552.5 283.5h5.2M560.4 283.5h7.4M570.6 283.5h3M579.3 283.5h5.5M316.8 288.5h3.2M324.3 288.5h7.5M334 288.5h8M344.5 288.5h6.6M355.3 288.5h6.8M365.3 288.5h5.5M375.1 288.5h5.6M385.3 288.5h5.7M394.7 288.5h3.1M402.4 288.5h5.9M411.2 288.5h7.6M423.9 288.5h5.7M432.4 288.5h5.8M440.7 288.5h3.8M448.2 288.5h3.6M455.5 288.5h6.1M463.7 288.5h6.8M472.9 288.5h7.4M485.4 288.5h6.1M493.6 288.5h6M503.2 288.5h8.7M514.4 288.5h8.1M528.6 288.5h7.4M541.2 288.5h4.2M551.3 288.5h6M563.1 288.5h8.5M574.2 288.5h7.7M312.9 293.5h6.8M325.7 293.5h6.5M336.9 293.5h4.9M343.7 293.5h3.2M349.5 293.5h6.7M360 293.5h6.1M371.6 293.5h3.8M378.3 293.5h6.9M387.3 293.5h3M393.8 293.5h3.6M400.8 293.5h4.3M409.5 293.5h6.5M418.9 293.5h6.7M429.5 293.5h3.8M439.1 293.5h4.5M446.1 293.5h3.6M454.3 293.5h8.2M467.6 293.5h5.4M476.1 293.5h3.1M483.7 293.5h6.4M493.5 293.5h6.9M504.2 293.5h8.6M517.7 293.5h4.5M527.8 293.5h3.3M535.2 293.5h5.4M543.6 293.5h3.4M552.1 293.5h3.1M559.3 293.5h8.6M570.6 293.5h4.2M579.2 293.5h6M315.6 299.5h7M328.5 299.5h5.8M339.6 299.5h7.2M352.3 299.5h5.6M362.8 299.5h6.4M372.4 299.5h4.3M381.2 299.5h3.5M390.3 299.5h3.9M396.3 299.5h3.6M405.6 299.5h5.1M413.3 299.5h3.2M418.6 299.5h7.2M430.3 299.5h7.2M442.4 299.5h3.4M450.2 299.5h5.2M460.6 299.5h7.9M474.1 299.5h3.4M483 299.5h8.5M497.3 299.5h3.6M503.7 299.5h3.7M509.5 299.5h8.1M522.9 299.5h6.8M535 299.5h6.8M544.9 299.5h3.6M550.9 299.5h7.5M561.3 299.5h4.9M569.9 299.5h3.1M576 299.5h4.7M313.8 304.5h8.3M324.5 304.5h8.3M334.9 304.5h4.2M342.2 304.5h8.4M354.6 304.5h5.3M365.4 304.5h4.4M373.6 304.5h6.2M384.9 304.5h7.5M397 304.5h5.1M405.4 304.5h3.9M414.7 304.5h7M426.6 304.5h4M434.4 304.5h7.6M446.3 304.5h3.8M453.9 304.5h8.3M465.2 304.5h4.1M472.5 304.5h7.2M485.1 304.5h3.9M491.7 304.5h4.5M499.5 304.5h6.1M508.3 304.5h5M516 304.5h8.9M529.8 304.5h3.6M539.2 304.5h3.6M546.4 304.5h8.9M560.4 304.5h7.4M571.6 304.5h4.2" stroke="#444" stroke-width=".9"/></g>
<g clip-path="url(#cShale)"><path d="M318.4 287.3h2.2M322.8 287.3h2.2M327.2 287.3h2.2M331.6 287.3h2.2M336 287.3h2.2M340.4 287.3h2.2M344.8 287.3h2.2M349.2 287.3h2.2M353.6 287.3h2.2M358 287.3h2.2M362.4 287.3h2.2M366.8 287.3h2.2M371.2 287.3h2.2M375.6 287.3h2.2M380 287.3h2.2M384.4 287.3h2.2M388.8 287.3h2.2M393.2 287.3h2.2M397.6 287.3h2.2M402 287.3h2.2M406.4 287.3h2.2M410.8 287.3h2.2M415.2 287.3h2.2M419.6 287.3h2.2M424 287.3h2.2M428.4 287.3h2.2M432.8 287.3h2.2M437.2 287.3h2.2M441.6 287.3h2.2M446 287.3h2.2M450.4 287.3h2.2M454.8 287.3h2.2M459.2 287.3h2.2M463.6 287.3h2.2M468 287.3h2.2M472.4 288.8h2.2M476.8 288.8h2.2M481.2 288.8h2.2M485.6 288.8h2.2M490 288.8h2.2M494.4 288.8h2.2M498.8 288.8h2.2M503.2 288.8h2.2M507.6 288.8h2.2M512 288.8h2.2M516.4 288.8h2.2M520.8 288.8h2.2M525.2 288.8h2.2M529.6 288.8h2.2M534 288.8h2.2M538.4 288.8h2.2M542.8 288.8h2.2M547.2 288.8h2.2M551.6 288.8h2.2M556 288.8h2.2M560.4 288.8h2.2M564.8 288.8h2.2M569.2 288.8h2.2M573.6 288.8h2.2M578 288.8h2.2" stroke="#1a1a1a" stroke-width="1.5"/></g>
<g clip-path="url(#cLime)"><path d="M317.4 316.2H579.4M317.4 326.6H579.4M317.4 336.9H579.4M317.4 347.3H579.4M321.9 303V316.2M337.8 303V316.2M353.7 303V316.2M369.6 303V316.2M385.5 303V316.2M401.4 303V316.2M417.3 303V316.2M433.2 303V316.2M449.1 303V316.2M465 303V316.2M480.9 303V316.2M496.8 303V316.2M512.7 303V316.2M528.6 303V316.2M544.5 303V316.2M560.4 303V316.2M576.3 303V316.2M329.9 316.2V326.6M345.8 316.2V326.6M361.7 316.2V326.6M377.6 316.2V326.6M393.5 316.2V326.6M409.4 316.2V326.6M425.3 316.2V326.6M441.2 316.2V326.6M457.1 316.2V326.6M473 316.2V326.6M488.9 316.2V326.6M504.8 316.2V326.6M520.7 316.2V326.6M536.6 316.2V326.6M552.5 316.2V326.6M568.4 316.2V326.6M321.9 326.6V336.9M337.8 326.6V336.9M353.7 326.6V336.9M369.6 326.6V336.9M385.5 326.6V336.9M401.4 326.6V336.9M417.3 326.6V336.9M433.2 326.6V336.9M449.1 326.6V336.9M465 326.6V336.9M480.9 326.6V336.9M496.8 326.6V336.9M512.7 326.6V336.9M528.6 326.6V336.9M544.5 326.6V336.9M560.4 326.6V336.9M576.3 326.6V336.9M329.9 336.9V347.3M345.8 336.9V347.3M361.7 336.9V347.3M377.6 336.9V347.3M393.5 336.9V347.3M409.4 336.9V347.3M425.3 336.9V347.3M441.2 336.9V347.3M457.1 336.9V347.3M473 336.9V347.3M488.9 336.9V347.3M504.8 336.9V347.3M520.7 336.9V347.3M536.6 336.9V347.3M552.5 336.9V347.3M568.4 336.9V347.3" stroke="#1a1a1a" stroke-width=".85"/></g>
<g clip-path="url(#cSand)"><path d="M318 349.3h.1M323.2 349.3h.1M329.8 349.8h.1M334.7 349.7h.1M340 348.9h.1M345.7 349.3h.1M351.3 350.2h.1M356.2 349.6h.1M362.1 349.4h.1M366.7 349.9h.1M373.1 350h.1M378.2 350.1h.1M383.6 349.8h.1M388.6 349.2h.1M394.3 348.8h.1M399.4 350h.1M405.2 349.7h.1M409.9 349.4h.1M415.6 349.7h.1M421 349.8h.1M427.2 348.9h.1M432.2 350h.1M437.1 349.5h.1M443.5 348.7h.1M448.2 348.9h.1M454 350.3h.1M458.9 348.8h.1M464.4 349.6h.1M470.1 349.5h.1M475.3 350.1h.1M480.5 349.3h.1M486.6 349h.1M491.6 349.3h.1M497.1 348.8h.1M502.9 349.2h.1M506.8 349.1h.1M512.7 348.6h.1M518.2 349.4h.1M524 349.2h.1M528.7 349h.1M534.9 350.3h.1M540 349h.1M545.8 349.3h.1M550.2 348.8h.1M556.5 350.1h.1M561.7 349.4h.1M567 349h.1M573 349.2h.1M577.9 350.1h.1M321.6 352.8h.1M327.1 352.5h.1M333 352.9h.1M338.4 352.8h.1M343 352.8h.1M348.5 352.6h.1M353.2 353.6h.1M359.1 352.7h.1M364.5 353.2h.1M370.1 353.4h.1M375.9 353h.1M381.7 353.8h.1M385.7 353.8h.1M392.5 353.7h.1M396.6 353.8h.1M402.8 352.3h.1M407.2 354h.1M413.7 352.8h.1M418.2 352.6h.1M423.8 353.7h.1M429.4 352.6h.1M435.7 353.7h.1M439.9 353.9h.1M446 353.7h.1M451.5 353.9h.1M457.1 353.8h.1M461.5 353.5h.1M467.5 353.6h.1M472.7 353.9h.1M478.3 352.8h.1M483.2 352.6h.1M489 352.4h.1M494.4 352.6h.1M499.8 353.2h.1M505.3 353.9h.1M509.8 353.8h.1M516 353.3h.1M521.7 353.8h.1M526.6 353.1h.1M533 352.4h.1M537.8 353.4h.1M542.3 353.4h.1M548.7 354h.1M553.5 354.1h.1M559.2 353.2h.1M565.3 352.4h.1M570.4 353.4h.1M575.2 353.9h.1M318.7 356.9h.1M324.6 356.4h.1M329.5 356.8h.1M335.1 357.5h.1M340 357.5h.1M345.6 356.9h.1M350.8 356.9h.1M357.3 357.2h.1M362.4 356.6h.1M367.1 356.5h.1M372.9 357.1h.1M378.6 356.1h.1M383.9 357.6h.1M389 356.1h.1M394 356h.1M399.3 357.7h.1M405.3 357.2h.1M411 357.6h.1M416.1 357.1h.1M421.6 357.3h.1M426.9 357.2h.1M431.7 357.2h.1M437.5 357.4h.1M442.3 356.3h.1M447.6 357.4h.1M454.4 357.2h.1M459 357.5h.1M465 357h.1M469.6 356.5h.1M475.2 356.6h.1M480.7 357.2h.1M486.9 356.1h.1M491.7 356.1h.1M496.4 357.5h.1M502.5 357.7h.1M507.7 356h.1M513 357.1h.1M519.3 357.8h.1M523.9 356.7h.1M528.7 357.2h.1M534.3 356.3h.1M539.4 356h.1M545.9 356.2h.1M551.7 356.2h.1M557 356.2h.1M561 357.3h.1M566.8 357.3h.1M572.1 356.1h.1M578.4 357.3h.1M322 359.9h.1M327.3 361h.1M332.4 361.4h.1M337.5 361.4h.1M343.6 359.7h.1M347.9 360.9h.1M354.6 359.8h.1M359.2 361h.1M364.3 361.2h.1M370.2 359.8h.1M375.4 360.7h.1M381 360.9h.1M385.9 361.1h.1M391.6 360.9h.1M397.5 360.5h.1M402.5 361.1h.1M408.8 361.1h.1M413.6 360.2h.1M418.2 361.5h.1M424.6 361.2h.1M429.4 360.8h.1M435.8 361.2h.1M440.6 360.3h.1M445.7 361.3h.1M451.1 360.9h.1M456.8 361.3h.1M462.5 360.2h.1M466.7 360.2h.1M472.7 360.8h.1M478.8 361.3h.1M482.9 361.2h.1M489.6 361.3h.1M494.6 360.2h.1M500.4 361.2h.1M505.6 361.3h.1M510.4 359.9h.1M516.1 361.1h.1M521 361.1h.1M527.5 360.1h.1M532.4 360.9h.1M537.6 360.1h.1M542.7 361.1h.1M548.9 360.5h.1M553.2 361.2h.1M559.7 360.1h.1M564.8 361.3h.1M570.7 360.6h.1M575.4 360.8h.1M318.1 363.7h.1M324.3 364.1h.1M329.5 364.1h.1M334.8 363.7h.1M339.5 365.2h.1M345.4 363.6h.1M351.2 364.8h.1M355.8 364.5h.1M361.5 364.3h.1M366.4 363.5h.1M373.4 365h.1M378 364.4h.1M383 364.8h.1M388.7 365.1h.1M394.6 364.9h.1M400.3 363.9h.1M404.2 363.8h.1M409.9 363.6h.1M415.1 364.4h.1M421.8 364.2h.1M427.3 365h.1M431.3 364.5h.1M437.2 363.6h.1M443.5 363.9h.1M448.3 364.6h.1M454.3 364.6h.1M458.8 364.2h.1M463.8 365.1h.1M470.6 363.8h.1M474.5 363.9h.1M480.4 365h.1M486.6 364.9h.1M490.7 364.8h.1M497.1 364.6h.1M503 363.5h.1M507 364.8h.1M513.7 364.6h.1M518.1 364.5h.1M524.2 363.6h.1M528.9 363.9h.1M534 364.3h.1M539.5 363.8h.1M544.8 364.6h.1M550 364.7h.1M555.7 363.5h.1M562.3 363.8h.1M567.7 365h.1M573 363.7h.1M577.7 363.6h.1M322.3 368.2h.1M327.1 367.7h.1M333 368h.1M338.1 367.4h.1M342.9 367.2h.1M349.1 368.1h.1M353.6 368.7h.1M359.2 367.8h.1M364.4 367.6h.1M370.9 367.7h.1M375.2 368h.1M380.8 368.7h.1M385.9 368.9h.1M391.2 368.7h.1M397.6 367.5h.1M402.7 367.6h.1M407.7 367.5h.1M413.3 368.9h.1M419.7 368.8h.1M423.7 367.6h.1M430.4 367.2h.1M435.5 367.6h.1M441.3 367.1h.1M446.4 367.7h.1M450.8 367.1h.1M457.3 368h.1M461.6 367.9h.1M468.2 367.5h.1M473 367.3h.1M477.8 368.5h.1M484.1 367.5h.1M488.5 367.3h.1M494.7 368h.1M499.6 367.5h.1M505.5 368.4h.1M511.2 368.1h.1M515.7 367.2h.1M521.9 367.8h.1M527.3 367.2h.1M532.8 367.7h.1M538.3 368.7h.1M543.1 367.1h.1M549.2 368h.1M554.5 367.6h.1M558.8 368.6h.1M564.5 367.4h.1M569.9 368.2h.1M574.7 368h.1M318.9 371h.1M324.6 372.3h.1M330.2 371.4h.1M335.4 371.5h.1M340.8 370.9h.1M346.4 372.5h.1M351.2 371.7h.1M356.7 371.8h.1M361.3 372.5h.1M367 371.1h.1M372.2 371.3h.1M378.8 370.9h.1M383 372.1h.1M388.6 370.8h.1M394.6 371.8h.1M399.9 372.1h.1M404.6 372.4h.1M411 370.9h.1M415.4 371.7h.1M421.4 371.3h.1M426.2 371.5h.1M431.7 371.9h.1M438.2 371.1h.1M443.2 372.1h.1M447.9 372.3h.1M454.5 371.5h.1M459.1 372.3h.1M464.7 371.5h.1M470.8 372.2h.1M475.2 371.2h.1M480.6 371.6h.1M487 372.2h.1M492.3 372.3h.1M497.6 370.9h.1M502.5 372.5h.1M508.5 371.2h.1M513.1 371.9h.1M518.4 371.8h.1M523.4 371.6h.1M529.5 370.8h.1M534.3 372.5h.1M540.7 372.5h.1M545.9 372.3h.1M551.7 372.4h.1M555.7 372h.1M561.5 372h.1M566.9 371.8h.1M573.3 371.9h.1M577.6 371.7h.1M322 375h.1M326.3 375.7h.1M331.4 375.6h.1M338.2 375.4h.1M342.5 375.3h.1M348.3 374.8h.1M353 374.7h.1M358.7 375.2h.1M364.1 374.9h.1M369.2 375.5h.1M375.8 375.6h.1M380.7 375.7h.1M385.6 375.8h.1M391.4 375.5h.1M397 375.3h.1M401.9 374.9h.1M407.2 375.4h.1M412.8 375.6h.1M417.7 375.1h.1M424.4 374.9h.1M429.3 375.4h.1M434.3 376.3h.1M439.7 375.9h.1M444.9 374.6h.1M451.4 375.3h.1M455.5 375.2h.1M461.5 375.8h.1M466.4 374.9h.1M473.2 375.8h.1M477.3 375.1h.1M483 375.7h.1M488.8 376h.1M494.5 375.4h.1M499.8 375.8h.1M505.2 375.4h.1M510.7 375.8h.1M516.3 374.7h.1M521.6 374.5h.1M526.9 375.6h.1M531.8 376.2h.1M537.3 375.3h.1M543.1 376.1h.1M548.2 375.2h.1M553.4 375.3h.1M559.2 375h.1M564.1 375.5h.1M569.4 375.1h.1M575.5 376h.1M318.8 378.5h.1M324 378.5h.1M329.8 379.2h.1M334.4 379.9h.1M340.2 379.7h.1M346.4 379.9h.1M350.8 379h.1M357.4 378.2h.1M361.4 379.2h.1M367.5 379.9h.1M373.3 379.2h.1M379.1 379.1h.1M383.7 379.4h.1M388.9 378.8h.1M394.7 378.8h.1M400.6 379.4h.1M405.3 378.4h.1M410.5 378.9h.1M416.2 379.2h.1M422.1 379.9h.1M426.9 379h.1M432.5 380h.1M437.4 379.2h.1M443.6 378.5h.1M448.2 380h.1M454.4 379.1h.1M458.7 379.8h.1M465 379.7h.1M470.9 379.8h.1M475.4 378.5h.1M480.6 379.1h.1M486.3 378.5h.1M491.2 379.3h.1M497.3 378.8h.1M503.3 379.3h.1M507.2 378.9h.1M513.8 378.8h.1M519 378.2h.1M523.8 379.7h.1M529.6 379.4h.1M534.4 379.1h.1M540.4 378.7h.1M545.9 379.2h.1M551.9 379.2h.1M556.4 378.4h.1M561.4 379.6h.1M566.7 378.4h.1M572.2 379.1h.1M578.6 379.3h.1M320.9 381.9h.1M327.4 382.5h.1M332.8 382.5h.1M337.3 382.4h.1M342.6 383.5h.1M348.7 382.5h.1M353.9 382.6h.1M358.7 383.5h.1M364.9 383.6h.1M370.1 383h.1M375.2 382h.1M381.7 383.4h.1M386.1 383.5h.1M392.3 382.4h.1M397.4 383.6h.1M402.6 383.6h.1M407.6 382.6h.1M413.8 382.3h.1M418.5 383.5h.1M424.2 383.3h.1M429.2 382.2h.1M434.8 382.2h.1M441.2 382.4h.1M445.9 382.1h.1M451.3 382.6h.1M456.5 382h.1M461.4 383.4h.1M467.2 382.3h.1M472.3 382.4h.1M477.8 382h.1M483.9 382.5h.1M488.5 383.2h.1M493.8 382.4h.1M500.3 382.1h.1M505.1 383.4h.1M511.1 382.2h.1M515.8 383.2h.1M521.2 383.6h.1M526.3 383.6h.1M532.2 382.3h.1M537.5 382.1h.1M543.3 382.4h.1M549 383h.1M553.6 382.3h.1M559.4 382.3h.1M565.2 382.1h.1M570 382.9h.1M575 383.3h.1M319 386.6h.1M323.9 386.3h.1M328.9 385.9h.1M335.5 386.2h.1M340.6 385.8h.1M345.9 386.3h.1M351.2 386.1h.1M355.9 386.2h.1M361.5 385.8h.1M367.7 386.1h.1M372.6 387.2h.1M378.6 387.2h.1M384.2 385.8h.1M388.6 385.7h.1M394.7 386.8h.1M399.5 386.3h.1M405.4 386.9h.1M410.2 387.1h.1M415.7 386.7h.1M420.9 385.8h.1M427.4 386.9h.1M432.5 385.7h.1M436.8 385.9h.1M442.5 386.1h.1M448.2 385.7h.1M453.5 386.7h.1M458.7 387.1h.1M464.7 386.9h.1M469.6 386.4h.1M475.7 386.2h.1M480 387.1h.1M486.6 386.1h.1M490.9 387.1h.1M497.2 385.7h.1M502 385.8h.1M508.3 386h.1M513.8 386.9h.1M517.9 386.9h.1M523.8 386.9h.1M529.9 386.1h.1M534.1 387.3h.1M540.1 387.3h.1M545.9 386.9h.1M551.5 386.7h.1M556.3 385.7h.1M562.1 386.4h.1M567.2 387.3h.1M572 387h.1M577.3 386.9h.1M321.2 390.3h.1M327.8 390.4h.1M332.5 389.7h.1M337.1 389.9h.1M343.1 389.7h.1M348.3 389.5h.1M354.3 390.5h.1M359 389.7h.1M364.8 390.1h.1M370.9 389.9h.1M375.3 390.9h.1M380.4 390.3h.1M386.1 390.8h.1M391.9 390.7h.1M396.7 390.5h.1M402.8 390.1h.1M408.4 390.8h.1M412.8 389.8h.1M418.6 389.7h.1M423.5 389.8h.1M429.1 390.6h.1M434.9 389.5h.1M440.1 390.1h.1M445.6 389.6h.1M450.5 389.3h.1M457.4 390.7h.1M461.3 390.6h.1M468.2 390.3h.1M472.2 390.2h.1M478.1 389.6h.1M483.7 389.3h.1M489.7 390.5h.1M494.6 391h.1M500 389.8h.1M504.8 389.5h.1M509.9 390.7h.1M516.5 389.8h.1M520.9 390.4h.1M527.4 391h.1M531.7 390.7h.1M538.1 390.6h.1M542.7 389.6h.1M548.9 389.9h.1M553.6 390.3h.1M559 390.8h.1M564.2 389.4h.1M570.1 390.4h.1M575.9 390.6h.1M320 393.9h.1M324.7 393.3h.1M329.8 394h.1M334.8 394.2h.1M340.4 393.8h.1M347.1 393.2h.1M351 393.8h.1M356.6 394.3h.1M361.7 394.5h.1M368.5 394.4h.1M373.2 393.5h.1M379 393.9h.1M384 393.6h.1M389.4 394.2h.1M395.4 394.6h.1M399.8 393.5h.1M405.6 394h.1M410.9 393.4h.1M415.8 393.6h.1M421.8 394.7h.1M428 394.6h.1M433.5 394.7h.1M438.3 394.5h.1M442.8 394.2h.1M449.1 393.5h.1M454.4 394.7h.1M459.7 394.2h.1M464.8 393.6h.1M471.1 393.1h.1M475.4 394.2h.1M481.2 393.2h.1M487 393.7h.1M492.2 393.7h.1M497.6 394h.1M502.7 393.2h.1M507.8 394.6h.1M513.8 393.2h.1M519.7 393.5h.1M523.9 394h.1M529.5 393.9h.1M535.4 393.4h.1M540.8 393.2h.1M546.1 394.1h.1M550.8 393.7h.1M556.2 393.8h.1M562.9 394h.1M568 394.4h.1M572.5 394.8h.1M578.9 393.2h.1M321.5 397h.1M327.8 397.7h.1M332.9 396.9h.1M338.3 396.8h.1M342.8 397.4h.1M347.9 397.8h.1M353.6 397.2h.1M359.8 397.5h.1M365.5 397.8h.1M370.8 397.7h.1M376.3 398.3h.1M380.5 398h.1M386.2 398.1h.1M392.1 398.2h.1M396.6 397.4h.1M403 398.4h.1M408.4 396.8h.1M413.6 396.9h.1M418.9 398.1h.1M423.6 398.4h.1M429.9 397.2h.1M434.5 397.5h.1M441 397.7h.1M445.2 396.7h.1M450.6 398.1h.1M456.1 397.7h.1M461.7 397.9h.1M467.2 397h.1M473.4 397.7h.1M478.5 398.2h.1M484.3 396.7h.1M488.8 397h.1M494.4 398.3h.1M500.3 396.8h.1M504.7 398.2h.1M510.9 397.4h.1M516 397h.1M522 397.4h.1M527.4 397.8h.1M531.6 397.3h.1M537.2 398.3h.1M543.2 396.8h.1M547.9 397.3h.1M553.8 397.7h.1M559.1 397.3h.1M563.8 397.7h.1M569.8 396.7h.1M575.4 398.5h.1M317.9 401.6h.1M323.5 400.9h.1M329.2 400.9h.1M334.8 401.4h.1M340.8 402.2h.1M344.7 401.4h.1M351.3 402h.1M356.7 401.5h.1M361.9 401.1h.1M366.7 401.8h.1M373 402.1h.1M378.1 400.9h.1M383.7 401.7h.1M388.7 401.5h.1M393.8 401.4h.1M399.3 400.5h.1M404.6 401h.1M411 401.3h.1M415.4 400.8h.1M420.6 401h.1M425.9 400.4h.1M432.4 401.2h.1M437.2 401.4h.1M442.3 400.7h.1M447.4 400.9h.1M453.1 401.7h.1M458.9 402.1h.1M464 402.1h.1M469.8 400.5h.1M474.5 401.4h.1M481.2 401h.1M486.3 401.2h.1M491.8 400.5h.1M496.6 402h.1M501.7 400.9h.1M506.7 400.7h.1M512.5 401.7h.1M517.8 401.1h.1M523.2 401.5h.1M529.6 401.6h.1M534 401.7h.1M540.6 401.5h.1M544.6 401.9h.1M551.2 401h.1M555.5 400.7h.1M561.5 402h.1M567.1 402.1h.1M571.8 401h.1M578 401.6h.1M321.5 404.7h.1M325.9 404.8h.1M331.3 405.2h.1M337.1 405h.1M343 404.6h.1M348.1 404.1h.1M354.3 405.1h.1M359.8 404.2h.1M364.6 405.4h.1M369.5 404.3h.1M374.7 404.4h.1M381 404.3h.1M386.5 404.9h.1M391.5 405.2h.1M396.9 405.3h.1M402.4 404.7h.1M408 404.6h.1M413.3 405.5h.1M418.8 404.7h.1M424.2 405.9h.1M429.1 404.6h.1M434.6 405.8h.1M439.4 404.1h.1M445.4 405.3h.1M451.2 404.8h.1M457 404.5h.1M462 404.3h.1M466.3 404.3h.1M471.7 405h.1M477.9 404.4h.1M483.9 404.8h.1M488 404.4h.1M494.4 405.8h.1M498.9 404.2h.1M505.3 404.5h.1M511 405h.1M515.8 404.7h.1M521.5 404.9h.1M526.1 405.7h.1M531.2 405.4h.1M536.5 405.3h.1M542.4 405.7h.1M547.3 405.1h.1M553.3 405.8h.1M559.5 405.2h.1M563.8 404.6h.1M569.2 404.9h.1M574.6 404.5h.1M319.4 408.3h.1M325.4 408.2h.1M330.1 408.1h.1M335.9 409.4h.1M340.4 409.2h.1M346.7 408.3h.1M351.3 408.7h.1M357.6 408.1h.1M362.7 408.9h.1M367.7 408.8h.1M373.8 408.2h.1M379.2 408.4h.1M384.4 409.4h.1M388.9 409.4h.1M395.6 408.3h.1M399.4 408h.1M406.3 407.8h.1M411.6 408.1h.1M416.7 408h.1M421.2 409h.1M426.5 408.4h.1M433.2 409.1h.1M438.6 409.6h.1M442.6 408.2h.1M449.2 409h.1M453.4 408.7h.1M459.1 408.6h.1M464.3 407.8h.1M471.1 408.4h.1M476.4 408h.1M481.1 408h.1M486.4 408.1h.1M492.3 408.1h.1M497.7 408.7h.1M502.1 408.4h.1M508.2 409.5h.1M513.3 408.2h.1M519.7 409.4h.1M524.7 408.3h.1M529.2 408.3h.1M534.5 407.9h.1M540.6 408.5h.1M546 408.5h.1M550.6 409h.1M557 408.8h.1M562.2 409h.1M568.3 409.4h.1M573.3 408.5h.1M578.1 408.6h.1M321.6 412.2h.1M327 411.8h.1M333.4 411.5h.1M338.1 413.2h.1M343 412.6h.1M348.6 411.9h.1M353.7 411.7h.1M360.1 412.9h.1M365.6 411.6h.1M370.7 412.1h.1M376 412.5h.1M380.9 413.2h.1M385.8 412.8h.1M392.5 412.4h.1M397.5 413.3h.1M402.3 412.6h.1M408.6 412.2h.1M413.9 412.2h.1M419 412.6h.1M424.7 412.1h.1M430 412.5h.1M434.7 412.6h.1M440.2 413.1h.1M445.9 412.8h.1M451.4 412.4h.1M456.3 411.8h.1M462.9 412.5h.1M467.6 412.4h.1M473.5 411.9h.1M477.8 413h.1M483.7 412.7h.1M489.7 413.1h.1M495.2 411.6h.1M499.8 413h.1M505.9 411.7h.1M510.2 412h.1M515.5 412.1h.1M522.1 412.4h.1M526.9 411.7h.1M532.2 413.3h.1M538.1 412.3h.1M543.1 412.9h.1M549 411.8h.1M554.3 412.2h.1M559.4 411.9h.1M564.6 412.1h.1M570 411.5h.1M575.1 412.5h.1M317.9 416.5h.1M323.5 415.8h.1M328.8 416.7h.1M334 416.3h.1M340.6 415.6h.1M345.3 416.6h.1M351 415.9h.1M355.5 416h.1M361.4 416.5h.1M366.7 415.9h.1M372.7 416.7h.1M377.6 415.9h.1M383.4 416.9h.1M388.2 416.9h.1M394.4 415.9h.1M399.7 415.8h.1M404.2 416.6h.1M410.1 416.1h.1M415.7 416.8h.1M421.5 415.2h.1M426.6 416h.1M431.8 416.7h.1M437.1 416.1h.1M443.3 416h.1M448 416.1h.1M454 416.4h.1M459.2 415.9h.1M463.5 416.4h.1M469.7 416.6h.1M475.5 415.4h.1M480 415.3h.1M486.4 415.4h.1M490.6 416.6h.1M496.8 415.3h.1M502.3 416.5h.1M507.4 415.3h.1M513.2 416h.1M518.4 417h.1M524.2 416.8h.1M528.5 415.8h.1M534.5 415.2h.1M540.6 415.7h.1M544.9 415.8h.1M550.3 416.7h.1M556.1 416.1h.1M561.3 415.3h.1M566.5 416.8h.1M572.7 416.7h.1M577.3 415.6h.1M320.9 419.6h.1M326.2 419.8h.1M331.8 419.6h.1M337.5 419.3h.1M343.1 419.9h.1M347.1 419.5h.1M353.3 419.6h.1M358.8 419.5h.1M363.7 420.3h.1M369.1 420.2h.1M375.3 420h.1M380.2 420.6h.1M385.6 420.5h.1M390.3 419.7h.1M396.7 419h.1M402.4 419h.1M407.4 419.2h.1M413.3 419.9h.1M418.5 419.8h.1M423.7 420.1h.1M428.5 419.3h.1M434.8 419.2h.1M440.3 419.3h.1M444.4 419.1h.1M450.9 420.6h.1M455.7 420.1h.1M460.9 420.5h.1M466.9 419.2h.1M471.3 420.2h.1M476.7 420.4h.1M482.5 419.3h.1M488.4 419.5h.1M493.7 419.2h.1M499.7 419.5h.1M505 419.2h.1M510.3 420.7h.1M515.1 419h.1M520.5 420.1h.1M525.6 419.9h.1M530.8 419.7h.1M537.2 419.7h.1M542.5 419.1h.1M548.2 419.1h.1M553.7 420.7h.1M559.2 419.8h.1M563.5 419.5h.1M569.7 419.8h.1M575.3 419.1h.1" stroke="#111" stroke-width="1.35" stroke-linecap="round"/></g>
<g clip-path="url(#cSlate)"><path d="M317.4 394.6H520M317.4 397.1H520M317.4 399.5H520M317.4 401.9H520M317.4 404.4H520M317.4 406.8H520M317.4 409.3H520M317.4 411.7H520M317.4 414.2H520M317.4 416.6H520M317.4 419.1H520M317.4 421.5H520M317.4 424H520M317.4 426.4H520M317.4 428.9H520M317.4 431.3H520M317.4 433.8H520M317.4 436.2H520M317.4 438.7H520M317.4 441.1H520M317.4 443.6H520M317.4 446H520M317.4 448.5H520" stroke="#1a1a1a" stroke-width="1"/></g>
<g clip-path="url(#cGran)"><path d="M401.5 378.1l-1 1.5l-1.8 -0.3M407.4 380.5l1.6 -0.2l0.8 1.4M412 379.2l2 0.3l0.5 1.9M425 380.3l-1.3 1.1l-1.5 -0.8M428.1 379l1.5 -0.7l1.2 1.1M438.8 378.5l-0.3 1.5l-1.5 0.3M441.6 379.8l1.7 -0.6l1.2 1.3M452.8 377.7l-0.6 1.7l-1.8 0.1M459.7 377.6l0.8 1.3l-0.9 1.2M466.5 379.2l0.6 1.6l-1.2 1.1M474.3 378.9l1.5 -0.1l0.7 1.4M482.7 378.2l-0.9 1.7l-2 -0.2M486 379.5l1.9 -0.6l1.3 1.5M496.2 377.7l0.7 1.3l-1 1.2M503.3 377.6l0.8 1.6l-1.1 1.3M509.4 378l1.2 1l-0.4 1.5M521 378l-1 1.5l-1.7 -0.3M528.1 380l-1.3 1.2l-1.6 -0.7M534.7 377.9l-0 1.6l-1.5 0.6M539.4 379.2l1.4 0.3l0.2 1.4M545.6 378.9l1.9 0.6l0.1 2M555.2 379.6l1.8 0.3l0.4 1.7M561.8 381.2l1.5 -0.6l1.1 1.1M569.3 380.7l1.6 -0.8l1.4 1.2M576.7 379.9l1.7 0.9l-0.2 1.9M403.1 384.5l-1.2 1.2l-1.6 -0.7M408.9 383.9l1.9 0.3l0.4 1.8M415.3 384l1.3 0.7l-0.2 1.5M425 385.4l1.8 0.9l-0.1 2M432.4 385.8l1.1 1.4l-0.9 1.5M439.1 385.3l-0.4 1.8l-1.8 0.3M446.5 385.9l-0.9 1.7l-1.9 -0.2M454.7 385.4l1.3 0.8l-0.2 1.5M463.2 386.4l-0.3 1.5l-1.5 0.3M471.2 386.4l-1.2 1.5l-1.8 -0.5M477.5 385.5l0.5 1.6l-1.3 1.1M486.1 385.6l-0.9 1.4l-1.6 -0.3M493.6 386.6l-1.1 1l-1.4 -0.6M496.2 383.9l1.9 0.4l0.4 1.9M505.4 385.9l1 1.2l-0.7 1.4M513.5 385.6l0 1.9l-1.7 0.7M523.1 386l-0.6 1.7l-1.8 0.1M527.9 385.8l1.2 0.9l-0.4 1.4M535.6 385.6l1.6 0.8l-0.2 1.8M539.6 384.8l1.5 -0.9l1.4 1M551.5 385.1l-0.6 1.6l-1.7 0M556.3 385.9l1.4 0.7l-0.1 1.6M564 384.1l0.3 1.6l-1.3 0.9M573.6 385.8l-0.1 1.7l-1.6 0.6M400.9 390l0 1.5l-1.3 0.6M405.1 389.9l1.9 0.5l0.3 2M416.7 391.2l-1.1 1.5l-1.8 -0.4M421.5 391.8l1.1 1.7l-1.1 1.7M426.4 391.2l1.9 0l0.7 1.8M436.4 391.9l1.3 -0.9l1.3 0.9M444.3 390.1l-0.6 1.5l-1.6 0M451.4 390l0.8 1.8l-1.3 1.4M460.6 390.4l-1.4 1.4l-1.8 -0.7M467.8 390.3l0.3 1.7l-1.4 1M473.6 390.7l0.1 1.8l-1.6 0.8M481.5 390.2l0.1 2l-1.8 0.8M490.3 392.5l-1.2 0.9l-1.3 -0.7M496.5 391.8l0.7 1.6l-1.2 1.2M502.4 390.3l-0.2 1.9l-1.8 0.5M510 390.2l2 -0.3l1.1 1.7M516.6 390.2l0.6 1.7l-1.4 1.2M525.4 391.7l-0.3 1.8l-1.8 0.4M531.3 392.3l1.7 0.6l0.1 1.8M541.1 390.2l0.2 1.9l-1.7 0.9M549.4 391.2l-1.4 1.2l-1.7 -0.8M554.4 392.2l1.8 -0.1l0.8 1.6M561.5 392l1.3 0.7l-0.2 1.5M567 390.7l1.9 -0.1l0.9 1.7M575.1 393.2l1.5 -0.7l1.2 1.1M404.2 396.3l1.6 -0l0.6 1.5M409.3 396.1l1.6 0.7l-0 1.7M419.8 396l1.3 1l-0.4 1.6M424.6 398l2 0.1l0.7 1.9M433.6 395.5l0.3 1.9l-1.6 1M442.1 397.5l-0.4 1.7l-1.7 0.3M448.8 398.3l-0.3 1.6l-1.6 0.3M456.3 395.9l0.8 1.4l-1 1.3M465.1 397.4l-0.4 1.4l-1.5 0.2M469 395.7l1.7 1l-0.3 2M477.3 398.2l1.7 -0.6l1.2 1.3M483.6 395.9l1.5 1.3l-0.6 1.8M493.9 397.1l0.3 2l-1.7 1M502.6 397.8l-0.5 1.6l-1.7 0.2M507.8 396.3l1.5 0.8l-0.2 1.7M513.7 397.2l2 -0l0.8 1.8M522 396.1l0.1 2l-1.8 0.9M528.4 398.8l1.6 -0.6l1.2 1.2M537.6 396.9l0.1 1.8l-1.6 0.8M544.4 397.8l1.9 0.5l0.2 1.9M551.4 397.3l1.8 -0.2l0.9 1.6M561.7 398.4l-1.2 1.6l-1.9 -0.5M566.3 397.1l0.2 2l-1.7 1M574.3 395.5l-0.1 1.8l-1.7 0.6M400.4 402.5l-0.7 1.5l-1.6 -0.1M407.7 404.5l1.8 -0.5l1.2 1.4M413 403.6l1.6 1l-0.3 1.8M422.2 401.9l1.3 0.6l-0.1 1.4M428.8 403.2l1.4 0.4l0.2 1.5M439.3 402.1l-0.5 1.4l-1.5 0M442.9 402.5l1.8 0.2l0.5 1.8M453.2 401.8l0.6 1.5l-1.1 1.1M460.9 401.8l-0.9 1.7l-1.9 -0.2M467.8 403l-0.4 1.4l-1.5 0.2M473.4 404l1.7 -0.7l1.3 1.3M481.4 401.8l1.4 1.1l-0.5 1.7M491.5 404.7l-1.1 1.7l-2 -0.3M494.2 402.5l1.8 0.9l-0.1 2M503.1 404l1.7 -0.3l0.9 1.5M510 402.4l1.1 1.2l-0.7 1.5M518.5 403l1.5 0.5l0.1 1.6M526.4 401.8l1.1 1.1l-0.6 1.4M533.1 404.3l1.7 0.4l0.3 1.8M543.3 403.5l-0.4 2l-2 0.4M548 401.6l-0.2 1.5l-1.4 0.4M557.4 402.6l-1 1.6l-1.9 -0.3M562.9 404.3l1.3 0.8l-0.2 1.5M568.7 402.6l1.4 0.5l0 1.5M579.2 402.3l-1.2 1.5l-1.9 -0.5M400.7 410.7l1.9 -0.2l0.9 1.7M411.1 410.5l-1.2 1.5l-1.8 -0.6M416.1 409.5l1.5 -0.3l0.8 1.3M421.8 410.4l1.6 0.1l0.5 1.5M434.4 408.5l-0.1 2l-1.9 0.6M441.1 410l-0.2 1.7l-1.6 0.4M444.6 409.8l1.4 -0.2l0.8 1.2M454.6 409.7l1.2 0.8l-0.3 1.4M462.5 408.9l0.9 1.1l-0.7 1.3M467.9 410.9l1.5 -0.6l1.1 1.2M475.2 407.7l1.1 1.5l-0.9 1.6M483.7 409.9l-1.1 1.3l-1.6 -0.5M489.7 409.8l1.5 -0.3l0.9 1.3M498.9 407.3l0.3 1.8l-1.6 1M506.5 408.8l-0.2 1.5l-1.4 0.4M513.2 409.1l0.1 1.9l-1.7 0.8M520.3 410l-0 1.7l-1.6 0.6M527.6 410.3l0.4 1.4l-1.2 0.9M535.3 410.1l1.7 0.2l0.4 1.6M542 407.3l0.3 1.9l-1.6 1M550.3 408.5l-1.5 1.2l-1.7 -0.9M555.5 409.4l2 0.3l0.5 1.9M567.8 409l-1.3 1.3l-1.7 -0.7M572.2 408.3l1.4 -0.2l0.7 1.3M402.7 414l-0.1 1.6l-1.5 0.5M409.3 415.9l0.8 1.3l-0.9 1.2M418 415.9l-1 1.1l-1.4 -0.5M424.8 415.5l-0.7 1.6l-1.7 -0M430.1 415.4l-0.5 1.4l-1.5 0.1M435.5 415.6l1.6 0.5l0.1 1.7M444.7 415.8l1.7 -1l1.5 1.2M450.4 415.2l1.8 -0.4l1 1.5M458.7 415l2 -0.5l1.2 1.6M467.2 416.6l1.8 -0.5l1.2 1.5M473 416.4l1.6 -0.4l1 1.3M482.5 416.1l1.8 -0.2l0.9 1.6M487.3 416.6l1.3 -0.8l1.2 0.9M497.5 414.3l0.5 1.7l-1.4 1.1M506.4 415.3l0.4 1.8l-1.5 1.1M514.4 415.7l-0.7 1.9l-2 0.1M518.9 415.6l1.6 -0.9l1.4 1.2M529.4 415.3l-0.9 1.3l-1.5 -0.3M534.3 414.5l-0.1 1.6l-1.5 0.5M540.7 416.4l1.4 0.6l-0.1 1.5M550.6 415.5l0.2 2l-1.8 1M557.2 415.2l-1.6 1.1l-1.6 -1M562.6 416l1.1 0.9l-0.4 1.4M573.3 416.5l-1.1 1.2l-1.5 -0.5M580.2 414.3l-1.1 1.5l-1.9 -0.5M402.4 420.9l1.7 0.7l-0 1.8M412.4 422.3l-1.2 1l-1.4 -0.7M418.4 421.6l0.9 1.8l-1.3 1.5M425.5 419.7l-0 2l-1.9 0.8M430.7 420l1.9 0.6l0.2 2M440.7 420.5l-0.2 2l-1.9 0.6M449.7 421.5l0 1.9l-1.7 0.7M453 421.6l1.6 0.3l0.3 1.6M463.3 421.6l1.6 0.1l0.5 1.5M471 421.1l0.5 1.8l-1.4 1.2M475.6 419.5l1.4 0.5l0 1.5M483.3 420.8l1.3 0.8l-0.2 1.5M493.3 422.7l-1.4 1.2l-1.6 -0.9M498.2 421.1l1.5 -0l0.6 1.4M508.8 419.6l-0 1.7l-1.6 0.6M517.1 420.3l-1.1 1.2l-1.5 -0.6M524.3 422.2l-0.7 1.4l-1.6 -0.1M528.6 419.9l0.1 1.6l-1.5 0.7M538.6 421.9l-1 1.2l-1.5 -0.4M543.7 419.7l0.1 1.5l-1.4 0.7M553.5 422.1l-1.3 1l-1.4 -0.9M556.6 422.3l1.5 0.2l0.4 1.4M564.5 422l2 -0.4l1.1 1.7M571.6 420.9l1.9 -0.3l1 1.6M399.7 426.9l1.5 -0.4l0.9 1.3M406 425.6l1.6 1.1l-0.4 1.9M413.3 427.5l1.7 0.2l0.5 1.6M420.7 426.9l1.2 1.5l-0.9 1.7M429.3 427.2l-0.7 1.4l-1.6 -0.1M436.4 426.3l1.7 -0.4l1 1.4M442.1 426.7l1.7 -0.4l1 1.4M450.2 426.3l1.1 1.1l-0.6 1.4M459.3 425.1l1.3 1.6l-0.9 1.8M465.6 428.1l1.9 0.2l0.5 1.8M474.4 429.1l-1.5 1.3l-1.7 -0.9M480.5 427.8l0.8 1.4l-1 1.2M487.1 428.5l1.5 0.1l0.5 1.4M494.7 426.3l1.2 1.4l-0.8 1.7M503.5 426.5l1.4 0.6l-0 1.6M509.4 426.4l2 -0.4l1.2 1.7M517 426.5l1.6 -1l1.5 1.1M525.8 425.6l1.2 1.5l-0.9 1.7M533.7 425.4l1 1.5l-1 1.5M542.8 428.1l-0.7 1.9l-2 0.1M546.4 425.7l1.7 1.1l-0.3 2M554.6 425.6l0.5 1.9l-1.5 1.2M560.3 426.9l1.5 -0.8l1.3 1.1M572.7 426.6l-0.3 1.8l-1.8 0.4M579.7 426.2l0 1.4l-1.3 0.6M403 433.8l1.1 1.7l-1.2 1.6M411.9 431.9l0.3 1.5l-1.3 0.9M418.3 435.4l-1.4 1l-1.4 -1M423.9 433.3l1.5 0.7l-0 1.7M430.1 434.9l1.4 -0.8l1.3 1M437.7 433.9l1.5 -1l1.5 1M446.5 431.7l0.7 1.7l-1.3 1.3M452.1 432.3l2 -0.4l1.1 1.7M463.5 431.2l0.9 1.6l-1.1 1.4M468.9 433l1.5 0.2l0.4 1.5M477 433.5l1.5 1.3l-0.6 1.9M487.1 433.5l-1.2 1.1l-1.4 -0.7M488.9 432.3l1.8 -0.8l1.5 1.4M499.8 434l1.5 0.5l0.1 1.6M507.3 433.5l1.3 1.2l-0.6 1.7M513.4 431.9l0.2 1.7l-1.5 0.8M523 433.9l0.2 1.8l-1.6 0.8M528.7 435l-1.2 1l-1.4 -0.7M537.1 432l0.6 1.4l-1.1 1.1M542.6 433.6l1.6 0.3l0.4 1.6M549.8 433.6l1.8 -0.7l1.3 1.4M557.6 432.6l0.1 1.9l-1.7 0.8M567.1 431.7l0.1 1.9l-1.7 0.8M573.9 433.6l-1.4 1.3l-1.7 -0.8M401.3 440.3l1.7 0.1l0.6 1.6M406.7 439.4l1.9 0.3l0.5 1.8M415.8 438.3l-0.4 1.5l-1.5 0.2M421.1 438.8l1.4 0.4l0.2 1.4M430.5 440.1l1.1 1l-0.5 1.4M438.9 438.5l0.6 1.6l-1.2 1.1M442.5 439.8l1.7 -0.1l0.7 1.6M453 440.1l1.7 -0.1l0.8 1.5M461.9 439.9l-0.8 1.6l-1.8 -0.1M469.7 439.3l-1.2 1l-1.4 -0.7M474.1 439.9l1.9 0.4l0.3 1.9M482.7 438l-1 1.5l-1.8 -0.3M489.2 437.2l0.9 1.7l-1.2 1.4M496.5 438.5l1.3 -0.8l1.3 0.9M504.2 440.6l1.6 0.2l0.4 1.5M512.1 441.3l1.3 -0.8l1.2 0.9M518.2 438.8l1.6 -0.2l0.8 1.4M525.6 437.3l1.3 1.1l-0.6 1.6M531.6 440l1.5 -0.5l1 1.2M543.2 439.6l-0 1.6l-1.5 0.6M547.2 440l1.5 0.8l-0.2 1.7M555.4 439.4l0.6 1.4l-1 1M562.3 439.4l1.5 1.1l-0.4 1.8M572.4 438.3l-0.5 1.4l-1.5 0.1M580.4 437.9l-0.1 1.9l-1.8 0.6M401.8 443.8l0.1 1.8l-1.6 0.8M410.3 444l0.5 1.4l-1.1 1M416.1 445.6l1.7 0.4l0.3 1.7M421.9 445.2l1.7 -0.9l1.5 1.2M432.8 445.8l0.3 1.8l-1.6 1M438.6 444.5l1.6 0.1l0.5 1.5M446.3 446.4l1.6 -0.1l0.7 1.4M456 444.1l-0.2 2l-1.9 0.6M459.1 445l1.7 0.7l-0 1.9M467.7 444.6l1.4 -0.4l1 1.1M477.7 444.7l-1.4 1.4l-1.8 -0.7M482.3 445.1l1.7 -0.4l1 1.4M492.8 443.7l-0.2 1.8l-1.7 0.5M497 445l1.6 -0.6l1.2 1.2M505.9 444.8l0.1 1.6l-1.4 0.7M513.8 444.6l-0.2 1.9l-1.8 0.6M522.6 444.4l-1.4 1.5l-1.9 -0.7M527.1 443.1l1.2 1.4l-0.8 1.6M535.9 445.8l-1.6 1.2l-1.7 -1M541.9 445.5l0.3 1.6l-1.3 0.9M549.9 444.7l-0.4 1.6l-1.7 0.2M554.5 444.9l1.9 -0.6l1.3 1.6M564.7 443.9l-0.4 1.5l-1.5 0.2M572.2 444.3l1.8 -0.1l0.8 1.6" stroke="#1a1a1a" stroke-width=".95"/></g>
<path d="M317.4 304.5L322 303.2L326 305L332 305.5L412 305.5L420 304L440 305.5L470 305L497 304.5L505 300L509 297.5L514 300.5L519 303.5L524 305.5L531 304.5L537 305.8L543 303L548 300L554 299L562 299.5L570 298.5L579.4 299.5" stroke="#1a1a1a" stroke-width="1"/>
<path d="M317.4 347.3H579.4" stroke="#1a1a1a" stroke-width=".9"/>
<path d="M317.4 392.6L330 391.8L343 392.4L352 391.6L357.4 390.3" stroke="#1a1a1a" stroke-width=".9"/>
<path d="M399.6 393.2H404M478 393H507" stroke="#1a1a1a" stroke-width=".9"/>
<path d="M404 449.3L413.6 447L424 442.6L433 438L439 430L445.2 424.6L452 418L460 412.3L480 403L500 395L520 387.5L537.3 380.7L546 377" stroke="#1a1a1a" stroke-width=".9"/>
<path d="M378.5 381.5L392.5 394.2L420 413.5L445 431.5L470 449.6L442.5 449.4L420 433.6L400 420L381.1 406.8L366.2 395.2L357.4 390.3Z" fill="#fff" stroke="#1a1a1a" stroke-width=".9"/>
<path d="M366.2 394.7L378.5 381.5M381.1 406.8L392.5 394.2" stroke="#1a1a1a" stroke-width=".9"/>
<clipPath id="cBD"><path d="M517 303L525.9 335L540 385L558.3 450.7L579.4 426.3L566 385L549.6 335L541 303Z"/></clipPath>
<path d="M517 303L525.9 335L540 385L558.3 450.7L579.4 426.3L566 385L549.6 335L541 303Z" fill="#fff"/>
<g clip-path="url(#cBD)"><path d="M518.5 304h2M518.5 305.4h2M522.7 303.4v2.4M524.1 303.4v2.4M526.9 303.4v2.4M528.3 303.4v2.4M531.1 304h2M531.1 305.4h2M535.3 303.4v2.4M536.7 303.4v2.4M539.5 303.4v2.4M540.9 303.4v2.4M519.7 308.4h2M519.7 309.8h2M523.9 307.8v2.4M525.3 307.8v2.4M528.1 307.8v2.4M529.5 307.8v2.4M532.3 307.8v2.4M533.7 307.8v2.4M536.5 308.4h2M536.5 309.8h2M540.7 308.4h2M540.7 309.8h2M520.9 312.8h2M520.9 314.2h2M525.1 312.2v2.4M526.5 312.2v2.4M529.3 312.2v2.4M530.7 312.2v2.4M533.5 312.8h2M533.5 314.2h2M537.7 312.2v2.4M539.1 312.2v2.4M541.9 312.2v2.4M543.3 312.2v2.4M522.2 316.6v2.4M523.6 316.6v2.4M526.4 316.6v2.4M527.8 316.6v2.4M530.6 317.2h2M530.6 318.6h2M534.8 317.2h2M534.8 318.6h2M539 316.6v2.4M540.4 316.6v2.4M543.2 317.2h2M543.2 318.6h2M523.4 321.6h2M523.4 323h2M527.6 321.6h2M527.6 323h2M531.8 321.6h2M531.8 323h2M536 321.6h2M536 323h2M540.2 321.6h2M540.2 323h2M544.4 321v2.4M545.8 321v2.4M524.6 325.4v2.4M526 325.4v2.4M528.8 325.4v2.4M530.2 325.4v2.4M533 326h2M533 327.4h2M537.2 325.4v2.4M538.6 325.4v2.4M541.4 326h2M541.4 327.4h2M545.6 326h2M545.6 327.4h2M525.8 329.8v2.4M527.2 329.8v2.4M530 329.8v2.4M531.4 329.8v2.4M534.2 329.8v2.4M535.6 329.8v2.4M538.4 329.8v2.4M539.8 329.8v2.4M542.6 330.4h2M542.6 331.8h2M546.8 330.4h2M546.8 331.8h2M527.1 334.8h2M527.1 336.2h2M531.3 334.8h2M531.3 336.2h2M535.5 334.2v2.4M536.9 334.2v2.4M539.7 334.8h2M539.7 336.2h2M543.9 334.2v2.4M545.3 334.2v2.4M548.1 334.8h2M548.1 336.2h2M528.3 338.6v2.4M529.7 338.6v2.4M532.5 338.6v2.4M533.9 338.6v2.4M536.7 339.2h2M536.7 340.6h2M540.9 339.2h2M540.9 340.6h2M545.1 338.6v2.4M546.5 338.6v2.4M549.3 339.2h2M549.3 340.6h2M529.5 343v2.4M530.9 343v2.4M533.7 343.6h2M533.7 345h2M537.9 343.6h2M537.9 345h2M542.1 343v2.4M543.5 343v2.4M546.3 343v2.4M547.7 343v2.4M550.5 343.6h2M550.5 345h2M530.8 348h2M530.8 349.4h2M535 348h2M535 349.4h2M539.2 347.4v2.4M540.6 347.4v2.4M543.4 347.4v2.4M544.8 347.4v2.4M547.6 348h2M547.6 349.4h2M551.8 348h2M551.8 349.4h2M532 352.4h2M532 353.8h2M536.2 352.4h2M536.2 353.8h2M540.4 351.8v2.4M541.8 351.8v2.4M544.6 352.4h2M544.6 353.8h2M548.8 351.8v2.4M550.2 351.8v2.4M553 352.4h2M553 353.8h2M533.2 356.8h2M533.2 358.2h2M537.4 356.2v2.4M538.8 356.2v2.4M541.6 356.8h2M541.6 358.2h2M545.8 356.2v2.4M547.2 356.2v2.4M550 356.8h2M550 358.2h2M554.2 356.8h2M554.2 358.2h2M534.4 361.2h2M534.4 362.6h2M538.6 361.2h2M538.6 362.6h2M542.8 360.6v2.4M544.2 360.6v2.4M547 360.6v2.4M548.4 360.6v2.4M551.2 361.2h2M551.2 362.6h2M555.4 360.6v2.4M556.8 360.6v2.4M535.7 365.6h2M535.7 367h2M539.9 365.6h2M539.9 367h2M544.1 365v2.4M545.5 365v2.4M548.3 365v2.4M549.7 365v2.4M552.5 365.6h2M552.5 367h2M556.7 365v2.4M558.1 365v2.4M536.9 370h2M536.9 371.4h2M541.1 370h2M541.1 371.4h2M545.3 369.4v2.4M546.7 369.4v2.4M549.5 370h2M549.5 371.4h2M553.7 370h2M553.7 371.4h2M557.9 370h2M557.9 371.4h2M538.1 374.4h2M538.1 375.8h2M542.3 373.8v2.4M543.7 373.8v2.4M546.5 374.4h2M546.5 375.8h2M550.7 373.8v2.4M552.1 373.8v2.4M554.9 374.4h2M554.9 375.8h2M559.1 374.4h2M559.1 375.8h2M539.3 378.2v2.4M540.7 378.2v2.4M543.5 378.8h2M543.5 380.2h2M547.7 378.2v2.4M549.1 378.2v2.4M551.9 378.2v2.4M553.3 378.2v2.4M556.1 378.8h2M556.1 380.2h2M560.3 378.8h2M560.3 380.2h2M540.6 382.6v2.4M542 382.6v2.4M544.8 382.6v2.4M546.2 382.6v2.4M549 383.2h2M549 384.6h2M553.2 383.2h2M553.2 384.6h2M557.4 382.6v2.4M558.8 382.6v2.4M561.6 382.6v2.4M563 382.6v2.4M541.8 387.6h2M541.8 389h2M546 387v2.4M547.4 387v2.4M550.2 387v2.4M551.6 387v2.4M554.4 387v2.4M555.8 387v2.4M558.6 387.6h2M558.6 389h2M562.8 387.6h2M562.8 389h2M543 392h2M543 393.4h2M547.2 391.4v2.4M548.6 391.4v2.4M551.4 392h2M551.4 393.4h2M555.6 391.4v2.4M557 391.4v2.4M559.8 392h2M559.8 393.4h2M564 391.4v2.4M565.4 391.4v2.4M544.3 395.8v2.4M545.7 395.8v2.4M548.5 396.4h2M548.5 397.8h2M552.7 396.4h2M552.7 397.8h2M556.9 395.8v2.4M558.3 395.8v2.4M561.1 396.4h2M561.1 397.8h2M565.3 396.4h2M565.3 397.8h2M545.5 400.2v2.4M546.9 400.2v2.4M549.7 400.2v2.4M551.1 400.2v2.4M553.9 400.2v2.4M555.3 400.2v2.4M558.1 400.8h2M558.1 402.2h2M562.3 400.2v2.4M563.7 400.2v2.4M566.5 400.8h2M566.5 402.2h2M546.7 405.2h2M546.7 406.6h2M550.9 405.2h2M550.9 406.6h2M555.1 405.2h2M555.1 406.6h2M559.3 405.2h2M559.3 406.6h2M563.5 405.2h2M563.5 406.6h2M567.7 405.2h2M567.7 406.6h2M547.9 409v2.4M549.3 409v2.4M552.1 409.6h2M552.1 411h2M556.3 409.6h2M556.3 411h2M560.5 409v2.4M561.9 409v2.4M564.7 409v2.4M566.1 409v2.4M568.9 409v2.4M570.3 409v2.4M573.1 409v2.4M574.5 409v2.4M549.2 413.4v2.4M550.6 413.4v2.4M553.4 414h2M553.4 415.4h2M557.6 414h2M557.6 415.4h2M561.8 414h2M561.8 415.4h2M566 413.4v2.4M567.4 413.4v2.4M570.2 413.4v2.4M571.6 413.4v2.4M574.4 413.4v2.4M575.8 413.4v2.4M550.4 418.4h2M550.4 419.8h2M554.6 417.8v2.4M556 417.8v2.4M558.8 418.4h2M558.8 419.8h2M563 417.8v2.4M564.4 417.8v2.4M567.2 418.4h2M567.2 419.8h2M571.4 417.8v2.4M572.8 417.8v2.4M575.6 418.4h2M575.6 419.8h2M551.6 422.2v2.4M553 422.2v2.4M555.8 422.2v2.4M557.2 422.2v2.4M560 422.2v2.4M561.4 422.2v2.4M564.2 422.2v2.4M565.6 422.2v2.4M568.4 422.2v2.4M569.8 422.2v2.4M572.6 422.2v2.4M574 422.2v2.4M576.8 422.2v2.4M578.2 422.2v2.4M552.9 427.2h2M552.9 428.6h2M557.1 426.6v2.4M558.5 426.6v2.4M561.3 426.6v2.4M562.7 426.6v2.4M565.5 426.6v2.4M566.9 426.6v2.4M569.7 427.2h2M569.7 428.6h2M573.9 426.6v2.4M575.3 426.6v2.4M578.1 426.6v2.4M579.5 426.6v2.4M554.1 431v2.4M555.5 431v2.4M558.3 431v2.4M559.7 431v2.4M562.5 431.6h2M562.5 433h2M566.7 431v2.4M568.1 431v2.4M570.9 431v2.4M572.3 431v2.4M575.1 431.6h2M575.1 433h2M579.3 431v2.4M580.7 431v2.4M555.3 435.4v2.4M556.7 435.4v2.4M559.5 435.4v2.4M560.9 435.4v2.4M563.7 435.4v2.4M565.1 435.4v2.4M567.9 436h2M567.9 437.4h2M572.1 435.4v2.4M573.5 435.4v2.4M576.3 435.4v2.4M577.7 435.4v2.4M580.5 436h2M580.5 437.4h2M556.5 439.8v2.4M557.9 439.8v2.4M560.7 440.4h2M560.7 441.8h2M564.9 439.8v2.4M566.3 439.8v2.4M569.1 440.4h2M569.1 441.8h2M573.3 439.8v2.4M574.7 439.8v2.4M577.5 440.4h2M577.5 441.8h2M581.7 440.4h2M581.7 441.8h2M557.8 444.2v2.4M559.2 444.2v2.4M562 444.8h2M562 446.2h2M566.2 444.2v2.4M567.6 444.2v2.4M570.4 444.2v2.4M571.8 444.2v2.4M574.6 444.8h2M574.6 446.2h2M578.8 444.8h2M578.8 446.2h2M583 444.8h2M583 446.2h2M559 448.6v2.4M560.4 448.6v2.4M563.2 449.2h2M563.2 450.6h2M567.4 449.2h2M567.4 450.6h2M571.6 448.6v2.4M573 448.6v2.4M575.8 448.6v2.4M577.2 448.6v2.4M580 449.2h2M580 450.6h2M584.2 448.6v2.4M585.6 448.6v2.4" stroke="#1a1a1a" stroke-width=".7"/></g>
<path d="M535.5 350.5L546.5 347L564.5 406L553.5 409.5Z" fill="#fff"/>
<path d="M517 303L525.9 335L540 385L558.3 450.7M541 303L549.6 335L566 385L579.4 426.3" stroke="#1a1a1a" stroke-width=".9"/>
<path d="M523.4 319.6L543.2 313.4L552.6 343.8L534.2 350.6Z" fill="#fff" stroke="#1a1a1a" stroke-width=".9"/>
<clipPath id="cSideSh"><path d="M579.4 242L605 223L605 281L579.4 300Z"/></clipPath>
<g clip-path="url(#cSideSh)"><path d="M580.4 235.2l7.3 -5.9M589.3 228.1l6.2 -4.9M598.1 221.1l8.6 -6.9M580.6 238.1l6.9 -5.5M589.2 231.1l4.7 -3.7M596 225.7l8.2 -6.5M581.5 240.3l8.8 -7M592 231.9l4.8 -3.9M598.8 226.4l5.4 -4.3M580.6 244l7.1 -5.7M589.9 236.6l5.6 -4.5M598.1 230l8.9 -7.1M579.6 247.8l4.2 -3.3M586.6 242.3l4.2 -3.4M593.2 236.9l6.9 -5.5M601.8 230l8 -6.4M579.8 250.7l6.3 -5M587.3 244.7l8.1 -6.5M597.1 236.8l4.7 -3.8M603.1 232l7.1 -5.7M581.3 252.5l7.3 -5.8M591.2 244.5l8.8 -7M602.4 235.6l5 -4M579.9 256.6l4.1 -3.2M586 251.7l7.6 -6.1M595.1 244.4l5.4 -4.3M602.3 238.7l7.5 -6M581.2 258.5l7.8 -6.2M590.9 250.8l8 -6.4M601.7 242.1l4.4 -3.5M581.6 261.3l4.6 -3.7M588.2 255.9l7.1 -5.7M598.2 248l5.9 -4.7M582 263.9l8 -6.4M592.9 255.2l6.3 -5.1M601.6 248.2l5 -4M581.9 267l7.2 -5.8M591.6 259.3l5.1 -4.1M599.4 253l8.9 -7.1M581 270.7l8 -6.4M590.7 262.9l8.5 -6.8M602 253.9l5.7 -4.6M580.7 273.9l6.8 -5.4M590.1 266.5l6.4 -5.1M597.7 260.3l8 -6.4M581.8 276.1l4.9 -3.9M588.5 270.7l7.9 -6.4M597.9 263.2l4.7 -3.8M604.7 257.7l7.6 -6.1M581.5 279.3l8.7 -7M592.3 270.7l8.7 -7M602.4 262.6l5.1 -4.1M580.3 283.3l7.6 -6.1M590.3 275.3l6.6 -5.3M599.6 267.8l6.8 -5.4M580.5 286.1l8.2 -6.6M591.6 277.2l5 -4M599.4 271l8.8 -7.1M581.1 288.6l5 -4M588.3 282.9l6.5 -5.2M597.1 275.8l4.1 -3.3M604.2 270.2l6.6 -5.3M581.8 291.1l6.8 -5.5M590.7 284l7.5 -6M599.5 276.9l6.7 -5.4M582.3 293.7l8.6 -6.9M592.6 285.5l6.4 -5.1M600.4 279.2l6.2 -4.9M582.1 296.8l6.4 -5.1M590.3 290.3l5 -4M597.5 284.5l8.6 -6.9" stroke="#111" stroke-width="1"/></g>
<clipPath id="cSideLi"><path d="M579.4 299.5L605 279L605 327L579.4 347.3Z"/></clipPath>
<g clip-path="url(#cSideLi)"><path d="M579.4 299.8L605 279.3M579.4 309.5L605 289M579.4 319.5L605 299M579.4 329.5L605 309M579.4 339.5L605 319M579.4 347.3L605 326.8M584.4 295.5v10M596.4 285.9v10M590.4 300.7v10M602.4 291.1v10M584.4 315.5v10M596.4 305.9v10M590.4 320.7v10M602.4 311.1v10M584.4 335.5v7.8M596.4 325.9v7.8" stroke="#1a1a1a" stroke-width=".85"/></g>
<clipPath id="cSideSa"><path d="M579.4 347.3L605 327L605 343L598 349L592 355L586 361L579.4 366Z"/></clipPath>
<g clip-path="url(#cSideSa)"><path d="M580.7 329.2h.1M583.6 329.6h.1M587.8 329.7h.1M591 330.2h.1M594.3 330.4h.1M597.9 330h.1M601.7 329.5h.1M582 333h.1M585.5 333h.1M589.2 332.6h.1M592.4 333.3h.1M596.6 333.1h.1M600.4 333.3h.1M604 332.7h.1M580.7 336.7h.1M584.5 335.9h.1M587.4 336.9h.1M590.9 337h.1M595.3 335.6h.1M598.1 336.6h.1M601.7 335.6h.1M582.4 339.2h.1M585.9 338.7h.1M589.1 339.6h.1M592.2 338.8h.1M596.6 340h.1M600.6 338.7h.1M603.6 339.7h.1M580.4 342.7h.1M583.6 341.7h.1M587.1 341.7h.1M591.3 342.4h.1M594.9 341.8h.1M598 341.9h.1M602.4 343.2h.1M582.5 344.9h.1M585.1 346.2h.1M589.2 345.9h.1M592.6 345.4h.1M596.4 345.4h.1M600.1 344.7h.1M603.8 346.1h.1M580 348.5h.1M584.3 348.4h.1M587.2 348.1h.1M591.2 347.8h.1M595.3 349.1h.1M598.6 349.2h.1M602.2 348.4h.1M582.1 351.7h.1M586.2 352.2h.1M588.9 352.4h.1M593.1 352.1h.1M596.8 351.5h.1M600.5 352.3h.1M603.8 352.1h.1M580.7 354.6h.1M584.3 354.1h.1M587.4 354.8h.1M590.6 354.6h.1M595 355h.1M598.1 355.5h.1M602.2 354.5h.1M582.2 358h.1M585.6 357.7h.1M589.8 358.1h.1M593 358.3h.1M597 357.1h.1M600.1 358.3h.1M603.3 357.7h.1M579.9 360.5h.1M583.9 360.4h.1M587.3 361.6h.1M591.3 361h.1M595.4 361.1h.1M599 361.2h.1M602.4 360.3h.1M582.1 364.5h.1M585.1 364.8h.1M588.8 364.1h.1M592.4 364.1h.1M596.5 363.4h.1M600.5 364h.1M603.6 364.3h.1M580.2 366.9h.1M584.2 367.3h.1M587.3 367.5h.1M591 366.4h.1M594.5 366.5h.1M598 367.6h.1M601.9 367.8h.1M582.3 369.6h.1M586.2 371h.1M588.7 370.9h.1M592.7 370.3h.1M597 369.9h.1M600 371h.1M603.9 370.2h.1" stroke="#1a1a1a" stroke-width="1.05" stroke-linecap="round"/></g>
<path d="M605 343L598 349L592 355L586 361L579.4 366" stroke="#1a1a1a" stroke-width=".8"/>
<clipPath id="cSideGr"><path d="M579.4 366L586 361L592 355L598 349L605 343L605 408L579.4 426.3Z"/></clipPath>
<g clip-path="url(#cSideGr)"><path d="M583.1 344.1l-1.4 1.1l-1.6 -0.9M588.1 342.9l0.3 1.6l-1.3 0.9M595 344.2l0.7 1.2l-0.9 1.1M601.8 343.6l1 1.1l-0.6 1.3M585.9 350.8l-0.5 1.6l-1.6 0.2M590.7 350.7l-0.2 1.4l-1.4 0.4M598.3 349.5l-0.5 1.6l-1.7 0.2M605.2 349.9l0 1.7l-1.5 0.6M581.8 356.7l-0.3 1.4l-1.4 0.3M588.8 355.3l-1.2 1.4l-1.8 -0.6M594.4 354.8l1.5 0.4l0.2 1.6M601.1 355.8l0.6 1.2l-0.9 1M583.9 361l0.7 1.5l-1.2 1.2M590.2 362.3l1.5 0.1l0.5 1.5M597 362.4l1.3 -0.5l0.9 1M605.1 361.1l-0.4 1.4l-1.4 0.2M582.8 368.5l-0.6 1.4l-1.5 0M588 367.9l1.5 0.7l-0.1 1.7M593.9 367.7l1.1 1.1l-0.5 1.4M600.8 367.9l1.3 -0.5l0.9 1M585.1 372.1l0 1.5l-1.4 0.6M588.7 372.7l1.7 0.1l0.5 1.6M598 372.2l-0.2 1.7l-1.7 0.5M603.4 371.9l1.5 0.9l-0.2 1.7M583.1 379.6l-0.1 1.7l-1.6 0.5M590.1 379.1l-1 1.2l-1.5 -0.5M595.2 379.5l1.4 0.6l-0 1.6M600.6 378.6l1.5 0.3l0.3 1.5M582.9 384.5l1.2 0.9l-0.4 1.5M592.5 384.9l-0.6 1.5l-1.6 0.1M597 384.4l1.8 -0.1l0.7 1.6M603 385.6l1.4 -0.8l1.3 1M583.4 390.4l-1.3 1.1l-1.5 -0.8M587.6 389.1l0.8 1.6l-1.2 1.3M595.2 390.5l-0.3 1.8l-1.8 0.4M600.8 390.2l1.8 -0.2l0.9 1.5M582.8 396.8l1.8 0.2l0.5 1.7M591.2 396.3l1.2 0.9l-0.4 1.5M597.9 396.2l0.9 1.4l-0.9 1.4M606.2 397.2l-1 1.2l-1.5 -0.5M583.4 403.1l-0.9 1.6l-1.8 -0.2M589.7 403.2l-1.3 1.1l-1.5 -0.8M595.9 401.5l-0.6 1.5l-1.6 0.1M602.6 401.2l-0.3 1.9l-1.9 0.4M582.4 409l1.6 0.1l0.5 1.5M588.7 408.9l1.4 -0.6l1.1 1.1M597.5 407.9l-0.4 1.4l-1.4 0.2M603.8 406.5l0.6 1.8l-1.4 1.2M579.9 414.4l1.5 -0l0.6 1.3M587.9 413l0.4 1.4l-1.1 0.9M593.4 413.9l1.8 -0.1l0.8 1.6M602.4 414.6l-0.6 1.5l-1.6 -0M585.2 421l-1 1.2l-1.5 -0.5M589.7 420.1l0.9 1.2l-0.7 1.3M598.6 419.7l-0.5 1.5l-1.6 0.1M603.6 418.7l1.8 0.5l0.2 1.9M579.8 426.7l1.4 -0.8l1.3 0.9M588.4 424.4l-0.1 1.7l-1.6 0.5M595.1 425.2l1.3 0.6l-0 1.5M602 424.8l0.3 1.9l-1.6 1" stroke="#1a1a1a" stroke-width=".8"/></g>
<clipPath id="cSideBa"><path d="M579.4 426.3L605 408L606 428L579.4 451Z"/></clipPath>
<g clip-path="url(#cSideBa)"><path d="M580.4 407.3h2M580.4 408.7h2M584.4 403.8v2.4M585.8 403.8v2.4M588.4 401.5h2M588.4 402.9h2M592.4 398v2.4M593.8 398v2.4M596.4 395.2v2.4M597.8 395.2v2.4M600.4 392.3v2.4M601.8 392.3v2.4M604.4 390h2M604.4 391.4h2M580.4 411.5h2M580.4 412.9h2M584.4 408v2.4M585.8 408v2.4M588.4 405.7h2M588.4 407.1h2M592.4 402.8h2M592.4 404.2h2M596.4 400h2M596.4 401.4h2M600.4 396.5v2.4M601.8 396.5v2.4M604.4 393.6v2.4M605.8 393.6v2.4M580.4 415.1v2.4M581.8 415.1v2.4M584.4 412.8h2M584.4 414.2h2M588.4 409.3v2.4M589.8 409.3v2.4M592.4 407h2M592.4 408.4h2M596.4 403.6v2.4M597.8 403.6v2.4M600.4 401.3h2M600.4 402.7h2M604.4 397.8v2.4M605.8 397.8v2.4M580.4 419.9h2M580.4 421.3h2M584.4 416.4v2.4M585.8 416.4v2.4M588.4 413.5v2.4M589.8 413.5v2.4M592.4 411.2h2M592.4 412.6h2M596.4 407.8v2.4M597.8 407.8v2.4M600.4 405.5h2M600.4 406.9h2M604.4 402.6h2M604.4 404h2M580.4 424.1h2M580.4 425.5h2M584.4 421.2h2M584.4 422.6h2M588.4 418.3h2M588.4 419.7h2M592.4 414.8v2.4M593.8 414.8v2.4M596.4 412.6h2M596.4 414h2M600.4 409.1v2.4M601.8 409.1v2.4M604.4 406.8h2M604.4 408.2h2M580.4 428.3h2M580.4 429.7h2M584.4 425.4h2M584.4 426.8h2M588.4 421.9v2.4M589.8 421.9v2.4M592.4 419v2.4M593.8 419v2.4M596.4 416.2v2.4M597.8 416.2v2.4M600.4 413.9h2M600.4 415.3h2M604.4 411h2M604.4 412.4h2M580.4 431.9v2.4M581.8 431.9v2.4M584.4 429.6h2M584.4 431h2M588.4 426.1v2.4M589.8 426.1v2.4M592.4 423.8h2M592.4 425.2h2M596.4 421h2M596.4 422.4h2M600.4 417.5v2.4M601.8 417.5v2.4M604.4 414.6v2.4M605.8 414.6v2.4M580.4 436.7h2M580.4 438.1h2M584.4 433.2v2.4M585.8 433.2v2.4M588.4 430.9h2M588.4 432.3h2M592.4 428h2M592.4 429.4h2M596.4 424.6v2.4M597.8 424.6v2.4M600.4 422.3h2M600.4 423.7h2M604.4 419.4h2M604.4 420.8h2M580.4 440.9h2M580.4 442.3h2M584.4 437.4v2.4M585.8 437.4v2.4M588.4 435.1h2M588.4 436.5h2M592.4 432.2h2M592.4 433.6h2M596.4 428.8v2.4M597.8 428.8v2.4M600.4 426.5h2M600.4 427.9h2M604.4 423v2.4M605.8 423v2.4M580.4 444.5v2.4M581.8 444.5v2.4M584.4 441.6v2.4M585.8 441.6v2.4M588.4 439.3h2M588.4 440.7h2M592.4 435.8v2.4M593.8 435.8v2.4M596.4 433.6h2M596.4 435h2M600.4 430.7h2M600.4 432.1h2M604.4 427.8h2M604.4 429.2h2M580.4 448.7v2.4M581.8 448.7v2.4M584.4 445.8v2.4M585.8 445.8v2.4M588.4 443.5h2M588.4 444.9h2M592.4 440.6h2M592.4 442h2M596.4 437.2v2.4M597.8 437.2v2.4M600.4 434.3v2.4M601.8 434.3v2.4M604.4 432h2M604.4 433.4h2" stroke="#1a1a1a" stroke-width=".7"/></g>
<path d="M579.4 426.3L605 408" stroke="#1a1a1a" stroke-width=".8"/>
<path d="M317.4 237.8L322 234L330 229L336 225L341.6 222.9L360 222.5L380 222.7L390.8 223.4L400 228.5L409 235.5L417.3 241L424 243L431 244L450 244.5L472 244.8L485.7 244.4L492 241.5L499 237.5L506.2 234.8L515 234L530 234L538 230L545 226L551 223.8L570 223.2L590 223L605 223L579.4 242L565 241.5L550 241L537 241L532 242L526.7 244.6L521 249.5L515 255.5L509 260L492 261L474.8 261.5L462 262.5L450 263.5L440 263.2L431 262.2L428 258.5L424 256.2L417.3 255.6L407.8 258.5L397.8 257.5L390 253.5L380 247.5L372 242.5L362.7 238.7L340 238L317.4 237.8Z" fill="#fff"/>
<clipPath id="cTop"><path d="M317.4 237.8L322 234L330 229L336 225L341.6 222.9L360 222.5L380 222.7L390.8 223.4L400 228.5L409 235.5L417.3 241L424 243L431 244L450 244.5L472 244.8L485.7 244.4L492 241.5L499 237.5L506.2 234.8L515 234L530 234L538 230L545 226L551 223.8L570 223.2L590 223L605 223L579.4 242L565 241.5L550 241L537 241L532 242L526.7 244.6L521 249.5L515 255.5L509 260L492 261L474.8 261.5L462 262.5L450 263.5L440 263.2L431 262.2L428 258.5L424 256.2L417.3 255.6L407.8 258.5L397.8 257.5L390 253.5L380 247.5L372 242.5L362.7 238.7L340 238L317.4 237.8Z"/></clipPath>
<g clip-path="url(#cTop)"><path d="M372 226c5 3,8 7,12 11s7 8,13 12M375.4 226.6c5 3,8 7,12 11s7 8,13 12M378.8 227.2c5 3,8 7,12 11s7 8,13 12M382.2 227.8c5 3,8 7,12 11s7 8,13 12M385.6 228.4c5 3,8 7,12 11s7 8,13 12M389 229c5 3,8 7,12 11s7 8,13 12M392.4 229.6c5 3,8 7,12 11s7 8,13 12M395.8 230.2c5 3,8 7,12 11s7 8,13 12M399.2 230.8c5 3,8 7,12 11s7 8,13 12" stroke="#1a1a1a" stroke-width=".7"/>
<path d="M344 231h7M356 227.5h9M368 231.5h5M352 235h8M330 233h6M560 227h6M585 226h7M548 232h8M566 233h7M590 231l6 -1M515 238h6M523 241h5M500 241.5l6 -1.5" stroke="#1a1a1a" stroke-width=".7"/>
<path d="M488 258c8 -4,14 -10,22 -16M492 257.5c8 -4,14 -10,22 -16M496 257c8 -4,14 -10,22 -16M500 256.5c8 -4,14 -10,22 -16M504 256c8 -4,14 -10,22 -16M508 255.5c8 -4,14 -10,22 -16" stroke="#1a1a1a" stroke-width=".6"/>
<path d="M502 258.2h.1M507.9 253.6h.1M503.8 260.8h.1M506.8 256.9h.1M506.8 258.9h.1M506.1 259.8h.1M504.3 260.8h.1M497.5 257.6h.1M508.4 251.4h.1M512.1 256.5h.1M503.7 253h.1M511.6 253.3h.1M513.1 250.6h.1M510.7 255.5h.1M499.1 255.7h.1M489 259.9h.1M513.7 258.8h.1M508 252.5h.1M510.5 251.9h.1M499.5 259h.1M486.1 260.8h.1M511.9 256.9h.1M505.1 253.6h.1M500.1 258.6h.1M484.9 260.5h.1M500.4 254.6h.1M494 256.5h.1M503.4 258.1h.1M505.6 254.8h.1M513.8 259.1h.1M509.1 253.9h.1M510.8 255.3h.1M510.7 252.8h.1M510.6 257.8h.1M500.3 258h.1M503.6 255.3h.1M512.9 257h.1M509.5 254.1h.1M507.4 251.7h.1M505.4 255.8h.1M498.3 260.4h.1M507.7 253.8h.1M510.5 252.7h.1M496.9 260.2h.1M513.2 254.7h.1M511.4 259.8h.1M486.6 259.1h.1M485.8 259.6h.1M513.8 251.4h.1M490.6 259.8h.1M509.6 257.6h.1M511.9 254.3h.1M490.4 257.5h.1M506.9 253.5h.1M502.5 259.6h.1M490.2 260.1h.1M513.4 254.3h.1M498 255.4h.1M489.7 258.1h.1M510.5 260.9h.1M505.5 253.6h.1M511.6 255h.1M502.4 258.4h.1M497.6 255.1h.1M508.7 257.2h.1M497.7 260.4h.1M506.3 258.4h.1M506.9 251.8h.1M499.7 255h.1M504.3 255.9h.1M509.7 251.2h.1M510.8 255.8h.1M498.5 258.5h.1M503.5 259h.1M487.4 260.6h.1M505.9 260.8h.1M488.2 259.7h.1M513.9 258.2h.1M511.7 253.4h.1M491.5 260.8h.1M493.7 256.8h.1M503.6 259.4h.1M500.1 259.6h.1M508.7 253.6h.1M495.2 260.9h.1M503.1 259.4h.1M511.4 257.6h.1M485.2 260.2h.1M492.2 258.2h.1M504.6 259.9h.1M510 252.9h.1M506.2 255.2h.1M504.2 253.9h.1M493.1 259.4h.1M501.4 255.8h.1M507.5 260.7h.1M511.2 251.6h.1M503.4 257h.1M512.5 259.4h.1M499.8 257.4h.1M498.8 257.4h.1M496.8 256h.1M491.8 259.7h.1M496 256.4h.1M512.5 253.4h.1M499.6 260.3h.1M506.2 256.5h.1M501.1 253.9h.1M508.2 259.6h.1M493 259.9h.1M492.3 260.7h.1M502.1 255.6h.1M501.2 255.7h.1M508.3 260.6h.1M510.1 252.8h.1M504.3 257.3h.1M503.3 260.6h.1M501.1 254.9h.1M489.7 258h.1M495.4 258.3h.1M509.5 259.4h.1M497.3 258.6h.1M493.3 257.6h.1M505.8 259.1h.1M508.2 255.8h.1M494.3 257.5h.1M501.2 259h.1M492.8 257h.1M512 260.6h.1M494.3 256.6h.1M493.5 260.2h.1M513.6 249.6h.1M504.9 260.9h.1M490.5 258.6h.1M508.5 252.4h.1M506 260.8h.1M493.2 257.3h.1M498.6 258.6h.1M483.6 260.2h.1M513.9 251.4h.1M509.5 254.8h.1M494.1 258.7h.1M498.7 256.9h.1M511.9 259.4h.1M513.8 254.3h.1M508.3 257.7h.1M505.6 252.7h.1M487.1 260.5h.1M507.5 258.5h.1M505 253.8h.1M507.3 258.9h.1M506.1 260.8h.1M483.4 260.4h.1M493.7 257.5h.1M488.5 259.9h.1M492.6 256.9h.1M507.6 253.4h.1M489.5 259.9h.1M491.4 257.9h.1M498.6 257.2h.1M512.4 251.5h.1M509.9 252.9h.1M513.6 254.2h.1M512.7 251.6h.1M493.9 257.5h.1M503 260.4h.1M492.1 260.9h.1M492.9 256.7h.1M510.2 259.3h.1M501.4 255.1h.1M508.5 257.3h.1M495.4 257h.1M499.5 255.2h.1M495.2 256.1h.1M500.2 260.2h.1M513.8 257.9h.1M490.6 257.8h.1M513.6 253.8h.1M513.7 254.9h.1M488 259.1h.1M502.1 260.3h.1M508.2 258.6h.1M497.4 260.9h.1M507.4 254.4h.1M498.2 259.4h.1M498.9 258.4h.1M507.2 259.3h.1M506.2 255.6h.1M510.8 258.6h.1M491.8 259.4h.1M508.9 256.4h.1M513.6 251.5h.1M501.4 259.5h.1M502.7 254.2h.1M483.9 260.3h.1" stroke="#1a1a1a" stroke-width=".8" stroke-linecap="round"/>
<path d="M477 261.2l0.8 -3.2M478.7 261.2l1.3 -2.8M480.4 261.2l1 -2.1M482.1 261.2l1 -1.8M483.8 261.2l1.2 -2.3M485.5 261.2l1.4 -2.3M487.2 261.2l1.1 -2.4M488.9 261.2l1.5 -2.2M490.6 261.2l1.3 -2M492.3 261.2l1.2 -2.1M494 261.2l1.5 -2.1M495.7 261.2l1.5 -2.7M497.4 261.2l1.1 -3.1M499.1 261.2l1 -2.8M500.8 261.2l1.2 -2.3M502.5 261.2l0.7 -2.3M504.2 261.2l0.9 -2.3M505.9 261.2l1.6 -2.1M507.6 261.2l1.3 -2.7" stroke="#1a1a1a" stroke-width=".9"/>
</g>
<path d="M431 262C432 254,436 249,444 248.5C452 248,455 253,463 253C471 253,472 247,471.5 245" stroke="#1a1a1a" stroke-width="1.3"/>
<path d="M476.5 245C478 254,470 258.5,461 258C453 257.5,452 252.5,446 252.5C441 252.5,438.5 255,441 257.5C444 259.5,451 258,453 260.5C454.5 262.5,452 264,449 263.6" stroke="#1a1a1a" stroke-width="1.3"/>
<path d="M437 262.5C440 263.5,445 264,449 263.6" stroke="#1a1a1a" stroke-width=".8"/>
<path d="M317.4 237.8L322 234L330 229L336 225L341.6 222.9L360 222.5L380 222.7L390.8 223.4L400 228.5L409 235.5L417.3 241L424 243L431 244L450 244.5L472 244.8L485.7 244.4L492 241.5L499 237.5L506.2 234.8L515 234L530 234L538 230L545 226L551 223.8L570 223.2L590 223L605 223" stroke="#1a1a1a" stroke-width=".9"/>
<path d="M317.4 237.8L340 238L362.7 238.7L372 242.5L380 247.5L390 253.5L397.8 257.5L407.8 258.5L417.3 255.6L424 256.2L428 258.5L431 262.2L440 263.2L450 263.5L462 262.5L474.8 261.5L492 261L509 260L515 255.5L521 249.5L526.7 244.6L532 242L537 241L550 241L565 241.5L579.4 242" stroke="#1a1a1a" stroke-width="1"/>
<path d="M317.4 237.8V449.2L579.4 451.0L606 428L605 223" stroke="#1a1a1a" stroke-width="1.1"/>
<path d="M579.4 242V451.0" stroke="#1a1a1a" stroke-width="1.1"/>
<path d="M579.4 242L605 223" stroke="#1a1a1a" stroke-width=".9"/>
<path d="M579.4 299.5L605 279M579.4 347.3L605 327" stroke="#1a1a1a" stroke-width=".8"/>
<rect x="329" y="266.5" width="90" height="10" fill="#fff"/>
<rect x="407" y="284.5" width="61.5" height="10.5" fill="#fff"/>
<rect x="336" y="301" width="77.5" height="9.5" fill="#fff"/>
<rect x="411" y="322.5" width="53" height="10" fill="#fff"/>
<rect x="412" y="365" width="52" height="10.5" fill="#fff"/>
<rect x="402" y="388" width="78" height="9.8" fill="#fff"/>
<rect x="340" y="421" width="32" height="11" fill="#fff"/>
<rect x="492" y="423" width="35" height="10.5" fill="#fff"/>
<g transform="translate(467,419.5) rotate(-24.5)"><rect x="-1" y="-9" width="74" height="10" fill="#fff"/></g>
<rect x="320.5" y="241.3" width="21.1" height="21.1" fill="#fff" stroke="#1a1a1a" stroke-width=".9"/>
<rect x="473.7" y="280.3" width="20.9" height="19" fill="#fff" stroke="#1a1a1a" stroke-width=".9"/>
<rect x="386.4" y="318.6" width="21.1" height="20.3" fill="#fff" stroke="#1a1a1a" stroke-width=".9"/>
<rect x="465.3" y="357.8" width="21.9" height="23.7" fill="#fff" stroke="#1a1a1a" stroke-width=".9"/>
<rect x="322" y="397.3" width="21.4" height="23.2" fill="#fff" stroke="#1a1a1a" stroke-width=".9"/>
<rect x="526.7" y="422" width="21.6" height="25.4" fill="#fff" stroke="#1a1a1a" stroke-width=".9"/>
<text x="331" y="255.5" font-size="9.6" fill="#1a1a1a" text-anchor="middle" stroke="#1a1a1a" stroke-width=".15">H</text>
<text x="484.3" y="293.7" font-size="9.6" fill="#1a1a1a" text-anchor="middle" stroke="#1a1a1a" stroke-width=".15">M</text>
<text x="397" y="332.9" font-size="9.6" fill="#1a1a1a" text-anchor="middle" stroke="#1a1a1a" stroke-width=".15">K</text>
<text x="476.3" y="373.3" font-size="9.6" fill="#1a1a1a" text-anchor="middle" stroke="#1a1a1a" stroke-width=".15">B</text>
<text x="332.6" y="412.5" font-size="9.6" fill="#1a1a1a" text-anchor="middle" stroke="#1a1a1a" stroke-width=".15">F</text>
<text x="537.6" y="438.1" font-size="9.6" fill="#1a1a1a" text-anchor="middle" stroke="#1a1a1a" stroke-width=".15">A</text>
<text x="330.7" y="273.8" font-size="8.6" fill="#1a1a1a" stroke="#1a1a1a" stroke-width=".16" textLength="86.4" lengthAdjust="spacing" style="white-space:pre">shale  and  siltstone</text>
<text x="409.2" y="292.2" font-size="8.6" fill="#1a1a1a" stroke="#1a1a1a" stroke-width=".16" textLength="56.8" lengthAdjust="spacing" style="white-space:pre">volcanic  ash</text>
<text x="338.1" y="308.4" font-size="8.6" fill="#1a1a1a" stroke="#1a1a1a" stroke-width=".16" textLength="73.8" lengthAdjust="spacing" style="white-space:pre">erosion   surface</text>
<text x="415.4" y="330" font-size="8.6" fill="#1a1a1a" stroke="#1a1a1a" stroke-width=".16" textLength="45.6" lengthAdjust="spacing" style="white-space:pre">limestone</text>
<text x="415.4" y="372.7" font-size="8.6" fill="#1a1a1a" stroke="#1a1a1a" stroke-width=".16" textLength="45.6" lengthAdjust="spacing" style="white-space:pre">sandstone</text>
<text x="404" y="395.2" font-size="8.6" fill="#1a1a1a" stroke="#1a1a1a" stroke-width=".16" textLength="73.6" lengthAdjust="spacing" style="white-space:pre">erosion  surface</text>
<text x="344.2" y="428.9" font-size="8.6" fill="#1a1a1a" stroke="#1a1a1a" stroke-width=".16" textLength="22.8" lengthAdjust="spacing" style="white-space:pre">slate</text>
<text x="495" y="430.6" font-size="8.6" fill="#1a1a1a" stroke="#1a1a1a" stroke-width=".16" textLength="30" lengthAdjust="spacing" style="white-space:pre">granite</text>
<g transform="translate(468.5,420.6) rotate(-24.5)"><text x="0" y="0" font-size="8.6" fill="#1a1a1a" stroke="#1a1a1a" stroke-width=".16" textLength="70" lengthAdjust="spacing" style="white-space:pre">erosion  surface</text></g>
<g transform="translate(392.2,411.2) rotate(35)"><text x="0" y="0" font-size="8.6" fill="#1a1a1a" stroke="#1a1a1a" stroke-width=".16" textLength="48" lengthAdjust="spacing">pegmatite</text></g>
<g transform="translate(376.6,392.2) rotate(38)"><text x="0" y="0" font-size="8.6" fill="#1a1a1a" stroke="#1a1a1a" stroke-width=".25">P</text></g>
<g transform="translate(534.6,328.6) rotate(74)"><text x="0" y="0" font-size="9" fill="#1a1a1a" stroke="#1a1a1a" stroke-width=".25">E</text></g>
<g transform="translate(539.6,353.2) rotate(73)"><text x="0" y="0" font-size="8.8" fill="#1a1a1a" stroke="#1a1a1a" stroke-width=".16" textLength="52" lengthAdjust="spacing" style="white-space:pre">basalt  dike</text></g>
</svg>
<!--/DIAG-->
  <span class="t serif" id="dQ10a" style="left:272.18px;top:469.00px;font-size:10.5px;letter-spacing:0.212px">10) Complete the below for the sequence of events using the above diagram.</span>
  <span class="t serif" id="dQ10b" style="left:290.29px;top:482.00px;font-size:10.5px;letter-spacing:0.208px">Units marked by an asterisk are the four igneous rocks that could be dated using radiometric methods.</span>
  <div class="abs" style="left:305.6px;top:503.3px;width:60.4px;height:21.6px;background:#fff;border:1px solid #222;border-top-color:#8a8a8a"></div>
  <span class="t" id="dYoung" style="left:314.99px;top:511.00px;font-size:10.23px;color:#222;letter-spacing:-0.079px">Youngest</span>
  <div class="abs" style="left:379.8px;top:518.9px;width:66.2px;height:1px;background:#c4c4c4"></div>
  <div class="abs" style="left:379.8px;top:537.8px;width:66.2px;height:1px;background:#d2d2d2"></div>
  <div class="abs" style="left:379.8px;top:556.7px;width:66.2px;height:1px;background:#555"></div>
  <div class="abs" style="left:379.8px;top:575.6px;width:66.2px;height:1px;background:#aaa"></div>
  <div class="abs" style="left:379.8px;top:594.5px;width:66.2px;height:1px;background:#111"></div>
  <div class="abs" style="left:379.8px;top:613.8px;width:66.2px;height:1px;background:#444"></div>
  <div class="abs" style="left:379.8px;top:632.7px;width:66.2px;height:1px;background:#8a8a8a"></div>
  <span class="t serif" style="left:448.6px;top:528.6px;font-size:10.2px">*</span>
  <span class="t serif" style="left:448.6px;top:547.3px;font-size:10.2px">*</span>
  <span class="t serif" style="left:448.6px;top:604px;font-size:10.2px">*</span>
</div>

<!-- ================= SCROLLBAR ================= -->
<div id="vscroll">
<!--SCROLL-->
<div class="abs" style="left:1011px;top:121px;width:13px;height:515.5px;background:#dcdcdc"></div>
<div class="abs" style="left:1012px;top:121px;width:11.5px;height:11px;background:#fff;border:1px solid #c8c8c8"></div>
<svg style="left:1015px;top:124.5px" width="6" height="4" viewBox="0 0 6 4"><path d="M0 3.4H6L3 .2Z" fill="#777"/></svg>
<div class="abs" style="left:1012px;top:577.4px;width:11.5px;height:31px;background:#fff;border:1px solid #c8c8c8"></div>
<div class="abs" style="left:1012px;top:624.6px;width:11.5px;height:11px;background:#fff;border:1px solid #c8c8c8"></div>
<svg style="left:1015px;top:628.6px" width="6" height="4" viewBox="0 0 6 4"><path d="M0 .4H6L3 3.6Z" fill="#555"/></svg>
<!--/SCROLL-->
</div>

<!-- ================= STATUS BAR ================= -->
<div id="statusbar">
<!--STATUS-->
<span class="t" id="stPage" style="left:5.12px;top:6.51px;font-size:7.54px;color:#4a4a4a;letter-spacing:0.109px">Page 10 of 10</span>
<span class="t" id="stWords" style="left:65.87px;top:6.51px;font-size:7.54px;color:#4a4a4a;letter-spacing:0.059px">3777 words</span>
<svg style="left:119px;top:3.5px" width="13" height="11" viewBox="0 0 13 11" fill="none" stroke="#555" stroke-width=".8">
 <path d="M7 .5H.6V9.4H5.6"/><path d="M7 .5V4H10.4V5.4"/><path d="M7 .5L10.4 4"/><path d="M6.6 6.6L11 10.6M11 6.6L6.6 10.6" stroke-width="1"/></svg>
<svg style="left:760.5px;top:3.1000000000000227px" width="11" height="11" viewBox="0 0 11 11" fill="none" stroke="#555" stroke-width=".8">
 <path d="M.5 3V.5H3M8 .5H10.5V3M10.5 8V10.5H8M3 10.5H.5V8"/><path d="M3 2.6H6.6L8 4V8.6H3Z"/></svg>
<span class="t" id="stFocus" style="left:773.87px;top:5.51px;font-size:7.54px;color:#4a4a4a;letter-spacing:-0.256px">Focus</span>
<svg style="left:811px;top:3.5px" width="12" height="11" viewBox="0 0 12 11" fill="none" stroke="#555" stroke-width=".8">
 <path d="M.5 .8H5.6V10.2H.5ZM5.6 .8H10.8V10.2H5.6Z"/><path d="M1.8 3H4.4M1.8 5H4.4M1.8 7H4.4M7 3H9.6M7 5H9.6M7 7H9.6" stroke-width=".6"/></svg>
<div class="abs" style="left:832.25px;top:.25px;width:29.5px;height:15.75px;background:#c6c6c6"></div>
<svg style="left:842px;top:3.5px" width="10" height="11" viewBox="0 0 10 11" fill="none" stroke="#444" stroke-width=".9">
 <path d="M.6 .6H8.6V10.4H.6Z"/><path d="M2.4 3H7M2.4 5.4H7M2.4 7.8H7" stroke-width="1.1"/></svg>
<svg style="left:871px;top:3.5px" width="13" height="11" viewBox="0 0 13 11" fill="none" stroke="#555" stroke-width=".8">
 <path d="M9.4 4V.6H.6V10H5"/><path d="M2 2.8H8M2 5H5" stroke-width=".7"/><circle cx="8.8" cy="7.4" r="3"/><path d="M5.8 7.4H11.8M8.8 4.4V10.4" stroke-width=".6"/></svg>
<div class="abs" style="left:905.8px;top:8.0px;width:74px;height:.9px;background:#a0a0a0"></div>
<div class="abs" style="left:940.8px;top:4.100000000000023px;width:4.2px;height:8.4px;background:#777"></div>
<div class="abs" style="left:987.2px;top:3.5px;width:.8px;height:9px;background:#e8e6e4"></div>
<span class="t" id="stZoom" style="left:1000.12px;top:6.51px;font-size:7.54px;color:#777;letter-spacing:-0.511px">100%</span>
<!--/STATUS-->
</div>

<!-- ================= TASKBAR ================= -->
<div id="taskbar">
<!--TASK-->
<svg style="left:12px;top:8px" width="17" height="16" viewBox="0 0 17 16" fill="#fff">
 <path d="M0 2.3L6.9 1.3V7.6H0ZM7.7 1.2L17 0V7.6H7.7ZM0 8.4H6.9V14.7L0 13.7ZM7.7 8.4H17V16L7.7 14.8Z"/></svg>
<svg style="left:66.5px;top:7px" width="16" height="16" viewBox="0 0 16 16" fill="none" stroke="#fff" stroke-width="1.1"><path d="M15.6 8H1.2M8.4 .8L1.2 8L8.4 15.2"/></svg>
<svg style="left:122px;top:7px" width="16" height="16" viewBox="0 0 16 16" fill="none" stroke="#fff" stroke-width="1.2"><circle cx="9.8" cy="5.8" r="4.8"/><path d="M6.4 9.4L.8 15.2"/></svg>
<svg style="left:174.5px;top:7px" width="16" height="16" viewBox="0 0 16 16" fill="none" stroke="#fff" stroke-width="1.6"><circle cx="8" cy="8" r="6.4"/></svg>
<svg style="left:227.5px;top:8px" width="18" height="14" viewBox="0 0 18 14" fill="none" stroke="#fff" stroke-width="1.1"><path d="M3.4 2.4H11.6V11.6H3.4Z"/><path d="M.6 .6V2.6M.6 11.4V13.4M14.4 .6V2.6M14.4 11.4V13.4M14.4 5.2V8.8"/><path d="M15.6 4.4H17.2M15.6 9.6H17.2" stroke-width="1.4"/></svg>
<svg style="left:280px;top:6px" width="20" height="20" viewBox="0 0 20 20">
 <circle cx="10" cy="10" r="9.4" fill="#1b7fd4"/><path d="M2 13C1 7,6 2.4,11 3C16 3.6,18.6 7.4,18 11H8.4C8.6 13.6,11 15.6,15.4 14.4C13.6 18,9 19.6,5.2 17.4C3.6 16.4,2.4 14.8,2 13Z" fill="#38c5e8"/><path d="M6.4 9.6C7 6.6,10 5.6,12.2 6.8C13.4 7.6,13.6 8.6,13.4 9.4H8C7.4 9.4,6.8 9.4,6.4 9.6Z" fill="#0b3f7c"/><path d="M10 19.4C5 19.4,1.6 15.6,1.4 12C3 16,7.6 17.4,11 16.4C13.6 15.6,15 14.6,15.6 14.2C14.6 17.6,12.4 19.4,10 19.4Z" fill="#55d27a"/></svg>
<div class="abs" style="left:274.75px;top:28.25px;width:30px;height:2px;background:#7ab8e8"></div>
<svg style="left:318px;top:8px" width="17" height="14" viewBox="0 0 17 14">
 <path d="M.4 1.4H6L7.4 3H16.6V13.4H.4Z" fill="#f7c646"/><path d="M.4 4.6H16.6V13.4H.4Z" fill="#fbd968"/><path d="M4.4 8.6H12.6V13.4H4.4Z" fill="#3f8fd8"/><path d="M5.8 10H11.2V13.4H5.8Z" fill="#fbd968"/></svg>
<div class="abs" style="left:311px;top:28.25px;width:30px;height:2px;background:#7ab8e8"></div>
<svg style="left:355px;top:6px" width="18" height="18" viewBox="0 0 18 18">
 <path d="M5.6 5V3.2C5.6 1.2,12.4 1.2,12.4 3.2V5" fill="none" stroke="#fff" stroke-width="1.1"/><path d="M.8 5H17.2V17H.8Z" fill="#fff"/>
 <rect x="5.4" y="7.4" width="3.2" height="3.2" fill="#e8512a"/><rect x="9.4" y="7.4" width="3.2" height="3.2" fill="#7ab83a"/><rect x="5.4" y="11.4" width="3.2" height="3.2" fill="#2b9ae0"/><rect x="9.4" y="11.4" width="3.2" height="3.2" fill="#f5b723"/></svg>
<svg style="left:391.5px;top:7px" width="24" height="19" viewBox="0 0 24 19">
 <path d="M.6 6.6L10 .6L19.4 6.6V15.4H.6Z" fill="#1d72c4"/><path d="M.6 6.6L10 12L19.4 6.6V15.4H.6Z" fill="#3b9bea"/><path d="M2.6 4.4H17.4V9L10 12.6L2.6 9Z" fill="#d6ebfb"/><path d="M.6 6.8L10 12.4L19.4 6.8V15.4H.6Z" fill="#2b88dc"/>
 <circle cx="18.2" cy="13.2" r="5" fill="#3a3a3a" stroke="#111" stroke-width=".8"/><text x="18.2" y="15.9" font-family="Liberation Sans, sans-serif" font-size="7.4" font-weight="bold" fill="#fff" text-anchor="middle">1</text></svg>
<svg style="left:427.5px;top:7px" width="18" height="17" viewBox="0 0 18 17">
 <path d="M5 .6H17.4V16.4H5Z" fill="#21a366"/><path d="M5 .6H11.2V8.5H5Z" fill="#107c41"/><path d="M11.2 8.5H17.4V16.4H11.2Z" fill="#185c37"/><path d="M11.2 .6H17.4V8.5H11.2Z" fill="#33c481"/>
 <rect x=".4" y="3.8" width="9.4" height="9.4" rx=".8" fill="#107c41"/><text x="5.1" y="11.2" font-family="Liberation Sans, sans-serif" font-size="7.4" font-weight="bold" fill="#fff" text-anchor="middle">X</text></svg>
<div class="abs" style="left:455.25px;top:0;width:35.75px;height:30px;background:#353535"></div>
<svg style="left:464px;top:7px" width="19" height="17" viewBox="0 0 19 17">
 <path d="M5 .6H18.4V16.4H5Z" fill="#41a5ee"/><path d="M5 4.6H18.4V8.6H5Z" fill="#2b7cd3"/><path d="M5 8.6H18.4V12.6H5Z" fill="#185abd"/><path d="M5 12.6H18.4V16.4H5Z" fill="#103f91"/>
 <rect x=".4" y="3.8" width="9.4" height="9.4" rx=".8" fill="#185abd"/><text x="5.1" y="11" font-family="Liberation Sans, sans-serif" font-size="6.8" font-weight="bold" fill="#fff" text-anchor="middle">W</text></svg>
<div class="abs" style="left:455.25px;top:28.25px;width:35.75px;height:2px;background:#7ab8e8"></div>
<svg style="left:500.75px;top:5.75px" width="18.6" height="18.4" viewBox="0 0 18.6 18.4">
 <rect x="1" y="1" width="16.6" height="16.4" fill="#000" stroke="#1a78d6" stroke-width="2.4"/><path d="M5.4 4.6L13.2 13.8M13.2 4.6L5.4 13.8" stroke="#fff" stroke-width="1.5"/></svg>
<svg style="left:536.75px;top:5.5px" width="19" height="19" viewBox="0 0 20 20">
 <circle cx="10" cy="10" r="9.4" fill="#8c8c8c"/><circle cx="10" cy="10" r="6" fill="#a8a8a8"/><path d="M10 4V16M4 10H16M6 6L14 14M14 6L6 14" stroke="#6a6a6a" stroke-width="1"/></svg>
<svg style="left:573.75px;top:5.75px" width="18.25" height="18.25" viewBox="0 0 18 18">
 <rect x="0" y="0" width="18" height="18" fill="#1a78d6"/><rect x="3" y="3.6" width="12" height="10.8" fill="none" stroke="#fff" stroke-width="1.1"/><path d="M3 6.2H15" stroke="#fff" stroke-width="1.6"/></svg>
<svg style="left:612.5px;top:6.5px" width="14.5" height="16.75" viewBox="0 0 18 18" preserveAspectRatio="none">
 <rect x=".4" y=".4" width="17.2" height="17.2" fill="#4a4a4a"/><rect x="1.6" y="1.6" width="14.8" height="3" fill="#d8d8d8"/><path d="M4 7L9 5.4L14 7L13 13L9 15L5 13Z" fill="#f4c430"/><path d="M6 9L9 8L12 9L11 12.4L9 13.4L7 12.4Z" fill="#fff"/><path d="M2 14L6 16M16 14L12 16" stroke="#d04a3a" stroke-width="1.4"/><path d="M8 10H10M9 9V11.6" stroke="#3a6fd8" stroke-width="1"/></svg>
<svg style="left:647px;top:7px" width="18" height="17" viewBox="0 0 18 17">
 <path d="M5 .6H17.4V16.4H5Z" fill="#1490df"/><path d="M5 .6H11.2V5.8H5Z" fill="#0364b8"/><path d="M11.2 .6H17.4V5.8H11.2Z" fill="#28a8ea"/><path d="M5 5.8H11.2V11H5Z" fill="#0a5fb0"/><path d="M11.2 5.8H17.4V11H11.2Z" fill="#14447d"/><path d="M5 11L17.4 16.4H5Z" fill="#35b8f1"/><path d="M17.4 9.6L8 16.4H17.4Z" fill="#50d9ff"/>
 <rect x=".4" y="3.8" width="9.4" height="9.4" rx=".8" fill="#0a5fb0"/><text x="5.1" y="11.2" font-family="Liberation Sans, sans-serif" font-size="7.4" font-weight="bold" fill="#fff" text-anchor="middle">O</text></svg>
<svg style="left:790.5px;top:10px" width="13" height="10" viewBox="0 0 13 10" fill="none" stroke="#fff" stroke-width="1">
 <path d="M2.6 2.6H12V8.6H2.6Z"/><path d="M4 4H10.6V7.2H4Z" fill="#fff" stroke="none"/><path d="M2 .6V3M.6 1.6H3.6M1 5.4H2.6" stroke-width=".9"/></svg>
<svg style="left:822.5px;top:10px" width="11" height="10" viewBox="0 0 11 10" fill="none" stroke="#fff" stroke-width="1">
 <path d="M.6 9.6C.6 4.4,4.8 .6,10 .6"/><path d="M3.6 9.6C3.6 6,6.4 3.6,10 3.6"/><path d="M6.6 9.6C6.6 7.8,8 6.6,10 6.6"/><circle cx="9.4" cy="9.2" r=".8" fill="#fff" stroke="none"/></svg>
<svg style="left:850.5px;top:9.5px" width="13" height="11" viewBox="0 0 13 11" fill="none" stroke="#fff" stroke-width="1">
 <path d="M.6 3.8H2.8L5.6 1.2V9.8L2.8 7.2H.6Z"/><path d="M7.4 3.6C8.4 4.6,8.4 6.4,7.4 7.4"/><path d="M9.2 2C11 3.8,11 7.2,9.2 9"/><path d="M11 .6C13.4 3.2,13.4 7.8,11 10.4" stroke-width=".8"/></svg>
<svg style="left:879.5px;top:8px" width="15" height="14" viewBox="0 0 15 14" fill="none" stroke="#fff" stroke-width="1">
 <path d="M5.6 11.6C5 13,2.4 13.6,1.2 12.4C.2 11.2,1.4 9.4,3.2 9.6C4.6 9.8,5.2 10.6,5.6 11.6ZM5.6 11.6L10.6 1.6C11.2 .4,13 1.2,12.6 2.4L8.6 12.4"/><path d="M8 7.6C10 5.8,13.6 6,14.2 8"/></svg>
<svg style="left:908px;top:10px" width="18" height="10" viewBox="0 0 18 10" fill="none" stroke="#fff" stroke-width="1">
 <rect x=".6" y=".6" width="16.6" height="8.8"/><path d="M2.6 3H15.4M2.6 5H15.4" stroke-dasharray="1.2 1" stroke-width=".9"/><path d="M4.6 7.2H13.4" stroke-width=".9"/></svg>
<span class="t" id="tkTime" style="left:940.04px;top:5.01px;font-size:9.22px;color:#fff;letter-spacing:-0.229px">4:34 PM</span>
<span class="t" id="tkDate" style="left:935.79px;top:19.00px;font-size:9.22px;color:#fff;letter-spacing:0.057px">3/14/2021</span>
<svg style="left:993px;top:8.5px" width="20" height="20" viewBox="0 0 20 20">
 <path d="M.8 .6H12.6V8.8H5L2.6 11V8.8H.8Z" fill="#fff"/><path d="M2.6 2.8H10.8M2.6 4.8H10.8M2.6 6.8H10.8" stroke="#222" stroke-width=".6"/>
 <circle cx="12" cy="11.5" r="6.2" fill="#3c3c3c" stroke="#0a0a0a" stroke-width="1"/><text x="12" y="14.5" font-family="Liberation Sans, sans-serif" font-size="8" font-weight="bold" font-style="italic" fill="#fff" text-anchor="middle">7</text></svg>
<!--/TASK-->
</div>

</body>
</html>
